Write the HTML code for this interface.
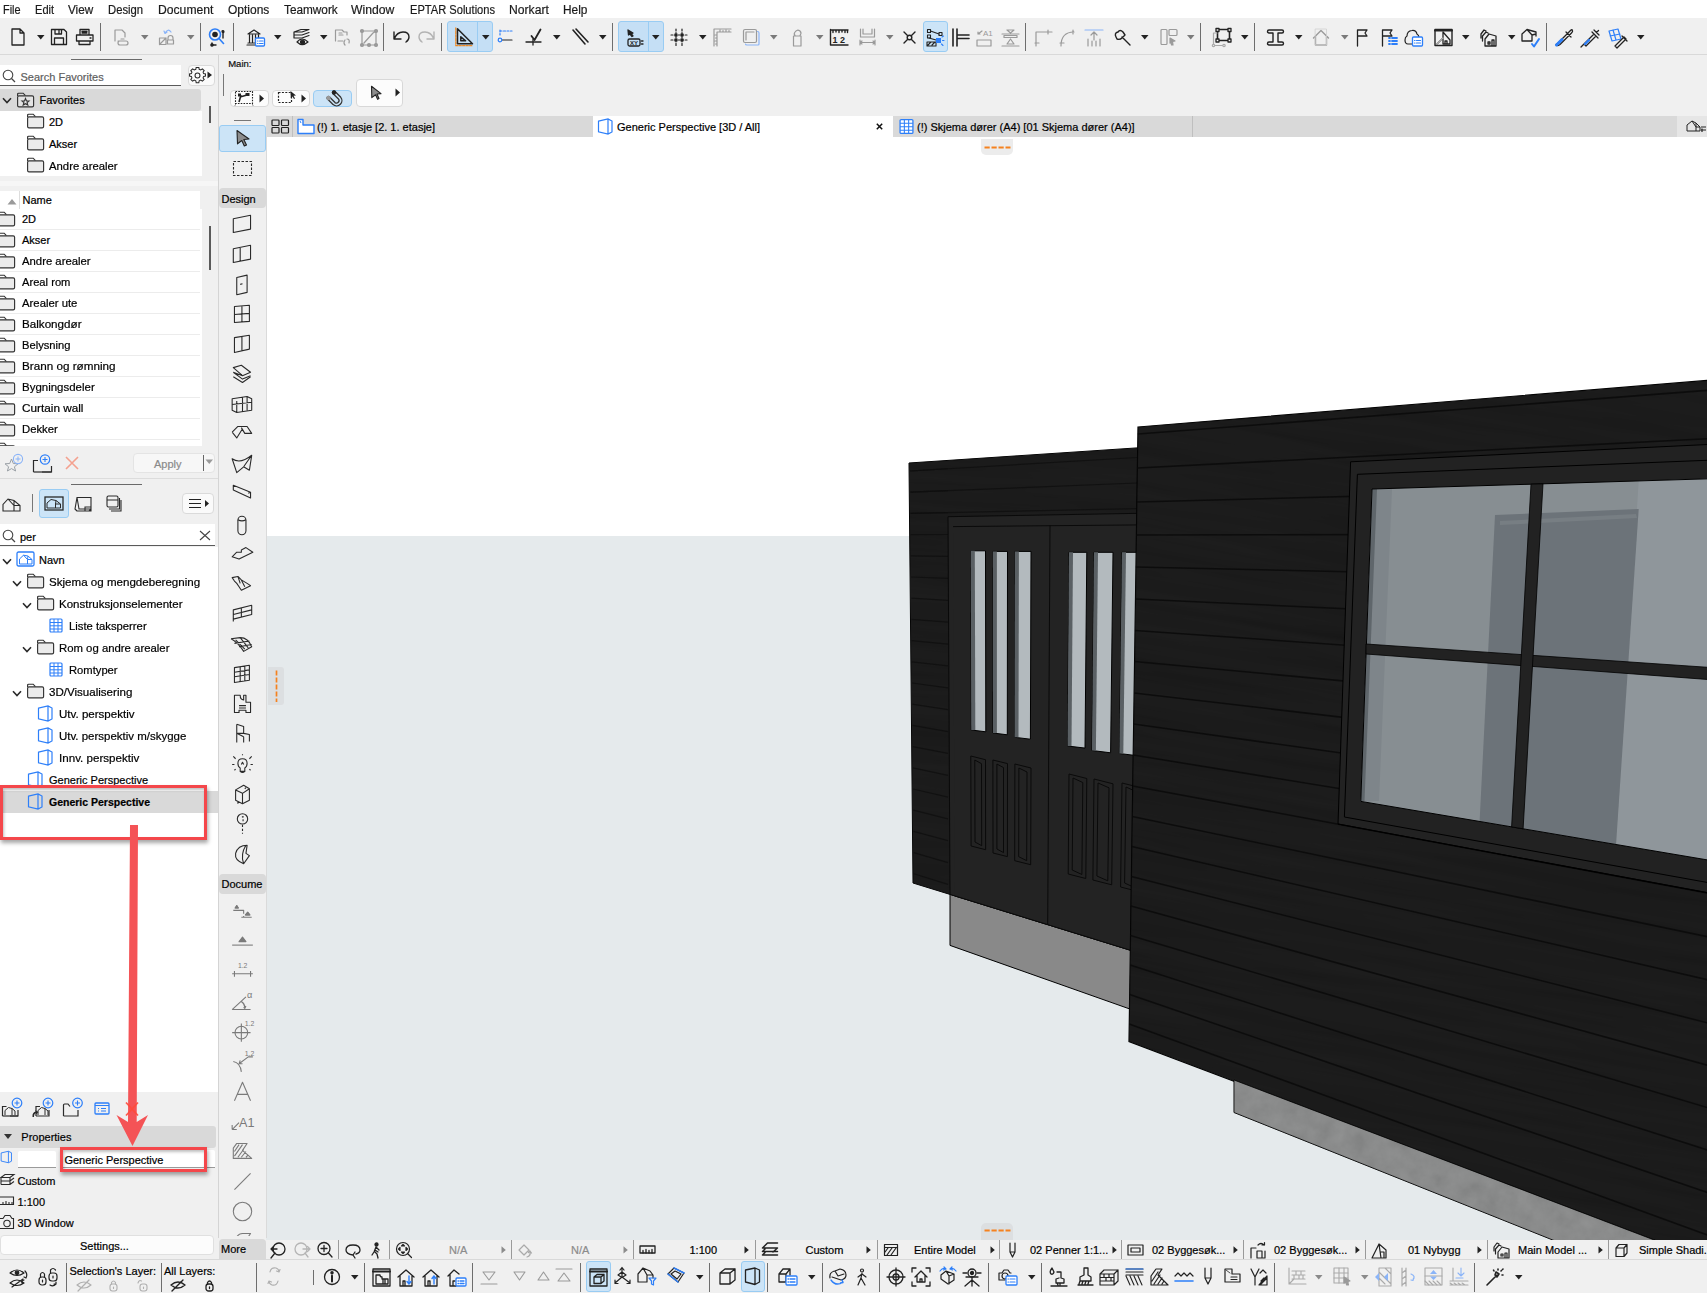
<!DOCTYPE html>
<html><head><meta charset="utf-8">
<style>
*{margin:0;padding:0;box-sizing:border-box}
html,body{width:1707px;height:1293px;overflow:hidden;background:#f0f0f0;font-family:"Liberation Sans",sans-serif;font-size:11px;color:#000}
.a{position:absolute}
.t{position:absolute;white-space:nowrap;line-height:1;-webkit-text-stroke:0.2px currentColor}
svg{position:absolute;overflow:visible}
</style></head><body>
<svg width="0" height="0" style="position:absolute">
<defs>
<symbol id="chev" viewBox="0 0 10 7"><path d="M1,1.2 L5,5.5 L9,1.2" fill="none" stroke="#2a2a2a" stroke-width="1.6"/></symbol>
<symbol id="folder" viewBox="0 0 19 16"><path d="M1.6,4 V2.2 Q1.6,1.2 2.6,1.2 H7.2 L9.4,3.6" fill="none" stroke="#333" stroke-width="1.15"/><rect x="1.6" y="3.8" width="16" height="11" rx="1.4" fill="#ebebeb" stroke="#333" stroke-width="1.15"/></symbol>
<symbol id="favfolder" viewBox="0 0 19 16"><path d="M1.6,4 V2.2 Q1.6,1.2 2.6,1.2 H7.2 L9.4,3.6" fill="none" stroke="#333" stroke-width="1.15"/><rect x="1.6" y="3.8" width="16" height="11" rx="1.4" fill="#e3e3e3" stroke="#333" stroke-width="1.15"/><path d="M9.5,6.5 L10.5,9 L13,9.1 L11.1,10.7 L11.8,13 L9.5,11.7 L7.2,13 L7.9,10.7 L6,9.1 L8.5,9Z" fill="none" stroke="#333" stroke-width="1.1"/></symbol>
<symbol id="navn" viewBox="0 0 19 16"><rect x="1" y="1" width="17" height="14" rx="1.5" fill="#fff" stroke="#2d7ff9" stroke-width="1.3"/><path d="M3.5,13 V8 L7.5,4.2 L12,5 L16,8.5 V13 Z M12,5 L11.5,8.5 H16 M11.5,13 V8.5 M7.5,4.2 L11.5,8.5" fill="none" stroke="#2d7ff9" stroke-width="1"/></symbol>
<symbol id="grid" viewBox="0 0 14 15"><rect x="1" y="1" width="12" height="13" rx="1" fill="#fff" stroke="#2d7ff9" stroke-width="1.2"/><path d="M5,1V14M9,1V14M1,4.5H13M1,7.8H13M1,11H13" stroke="#2d7ff9" stroke-width="1"/></symbol>
<symbol id="p3d" viewBox="0 0 17 17"><path d="M1.5,3.2 L11,1 L15,3 V14 L11,16 L1.5,13.8 Z M11,1 V16" fill="none" stroke="#2d7ff9" stroke-width="1.2"/></symbol>
<symbol id="gear" viewBox="0 0 18 18"><path d="M7.6,1.5 H10.4 L10.8,3.6 L12.4,4.3 L14.2,3.1 L16.1,5 L14.9,6.8 L15.5,8.4 L17.5,8.8 V11.2 L15.5,11.6 L14.9,13.2 L16.1,15 L14.2,16.9 L12.4,15.7 L10.8,16.4 L10.4,18.5 H7.6 L7.2,16.4 L5.6,15.7 L3.8,16.9 L1.9,15 L3.1,13.2 L2.5,11.6 L0.5,11.2 V8.8 L2.5,8.4 L3.1,6.8 L1.9,5 L3.8,3.1 L5.6,4.3 L7.2,3.6Z" transform="translate(0,-1) scale(1,0.95)" fill="none" stroke="#2a2a2a" stroke-width="1.1"/><circle cx="9" cy="9" r="2.6" fill="none" stroke="#2a2a2a" stroke-width="1.1"/></symbol>
</defs></svg>

<!-- 3D viewport -->
<div class="a" style="left:266px;top:137px;width:1441px;height:1103px;background:#fff;overflow:hidden">
<svg id="scene" width="1441" height="1103" viewBox="266 137 1441 1103" style="left:0;top:0">
<rect x="266" y="536" width="1441" height="704" fill="#e5eaec"/>
<!--SCENE_START-->
<defs>
<filter id="grain" x="0" y="0" width="100%" height="100%" filterUnits="objectBoundingBox">
<feTurbulence type="fractalNoise" baseFrequency="0.004 0.09" numOctaves="3" seed="7" result="n"/>
<feColorMatrix in="n" type="matrix" values="0.33 0.33 0.33 0 0  0.33 0.33 0.33 0 0  0.33 0.33 0.33 0 0  0 0 0 0 1"/>
</filter>
<filter id="concrete" x="0" y="0" width="100%" height="100%" filterUnits="objectBoundingBox">
<feTurbulence type="fractalNoise" baseFrequency="0.06" numOctaves="4" seed="2" result="n"/>
<feColorMatrix in="n" type="matrix" values="0.33 0.33 0.33 0 0  0.33 0.33 0.33 0 0  0.33 0.33 0.33 0 0  0 0 0 0 1"/>
</filter>
</defs>
<polygon points="909.0,463.0 1140.0,447.7 1140.0,953.2 950.0,894.4 913.0,883.0" fill="#121212" stroke="#000" stroke-width="1"/>
<clipPath id="lwc"><polygon points="909.0,463.0 1140.0,447.7 1140.0,953.2 950.0,894.4 913.0,883.0"/></clipPath>
<g clip-path="url(#lwc)"><rect x="850" y="380" width="350" height="600" filter="url(#grain)" opacity="0.06" transform="rotate(4 1000 680)"/></g>
<line x1="910.1" y1="471.0" x2="948" y2="468.7" stroke="#0f0f0f" stroke-width="1.2" stroke-opacity="0.8"/>
<line x1="910.3" y1="492.2" x2="948" y2="490.6" stroke="#0f0f0f" stroke-width="1.2" stroke-opacity="0.8"/>
<line x1="910.5" y1="513.4" x2="948" y2="512.6" stroke="#0f0f0f" stroke-width="1.2" stroke-opacity="0.8"/>
<line x1="910.7" y1="534.6" x2="948" y2="534.5" stroke="#0f0f0f" stroke-width="1.2" stroke-opacity="0.8"/>
<line x1="910.9" y1="555.8" x2="948" y2="556.4" stroke="#0f0f0f" stroke-width="1.2" stroke-opacity="0.8"/>
<line x1="911.1" y1="577.0" x2="948" y2="578.4" stroke="#0f0f0f" stroke-width="1.2" stroke-opacity="0.8"/>
<line x1="911.3" y1="598.2" x2="948" y2="600.3" stroke="#0f0f0f" stroke-width="1.2" stroke-opacity="0.8"/>
<line x1="911.5" y1="619.4" x2="948" y2="622.2" stroke="#0f0f0f" stroke-width="1.2" stroke-opacity="0.8"/>
<line x1="911.7" y1="640.6" x2="948" y2="644.1" stroke="#0f0f0f" stroke-width="1.2" stroke-opacity="0.8"/>
<line x1="911.9" y1="661.8" x2="948" y2="665.9" stroke="#0f0f0f" stroke-width="1.2" stroke-opacity="0.8"/>
<line x1="912.1" y1="683.0" x2="948" y2="687.8" stroke="#0f0f0f" stroke-width="1.2" stroke-opacity="0.8"/>
<line x1="912.3" y1="704.2" x2="948" y2="709.7" stroke="#0f0f0f" stroke-width="1.2" stroke-opacity="0.8"/>
<line x1="912.5" y1="725.4" x2="948" y2="731.6" stroke="#0f0f0f" stroke-width="1.2" stroke-opacity="0.8"/>
<line x1="912.7" y1="746.6" x2="948" y2="753.4" stroke="#0f0f0f" stroke-width="1.2" stroke-opacity="0.8"/>
<line x1="912.9" y1="767.8" x2="948" y2="775.3" stroke="#0f0f0f" stroke-width="1.2" stroke-opacity="0.8"/>
<line x1="913.1" y1="789.0" x2="948" y2="797.1" stroke="#0f0f0f" stroke-width="1.2" stroke-opacity="0.8"/>
<line x1="913.3" y1="810.2" x2="948" y2="818.9" stroke="#0f0f0f" stroke-width="1.2" stroke-opacity="0.8"/>
<line x1="913.5" y1="831.4" x2="948" y2="840.7" stroke="#0f0f0f" stroke-width="1.2" stroke-opacity="0.8"/>
<line x1="913.7" y1="852.6" x2="948" y2="862.6" stroke="#0f0f0f" stroke-width="1.2" stroke-opacity="0.8"/>
<line x1="913.9" y1="873.8" x2="948" y2="884.4" stroke="#0f0f0f" stroke-width="1.2" stroke-opacity="0.8"/>
<line x1="910.1" y1="471.0" x2="1137" y2="457.5" stroke="#0f0f0f" stroke-width="1.2" stroke-opacity="0.8"/>
<line x1="910.3" y1="492.2" x2="1137" y2="483.0" stroke="#0f0f0f" stroke-width="1.2" stroke-opacity="0.8"/>
<line x1="910.5" y1="513.4" x2="1137" y2="508.6" stroke="#0f0f0f" stroke-width="1.2" stroke-opacity="0.8"/>
<polygon points="950.0,894.4 1140.0,953.2 1140.0,1012.6 950.0,945.4" fill="#898989" stroke="#000" stroke-width="1"/>
<polygon points="948.0,516.7 1140.0,513.3 1140.0,953.2 950.0,894.4" fill="#232323" stroke="#0a0a0a" stroke-width="1"/>
<polyline points="953.0,526.6 1140.0,524.9 1140.0,953.2 954.8,895.9" fill="#232323" stroke="#0a0a0a" stroke-width="1"/>
<line x1="1050" y1="525.7" x2="1047.7" y2="924.7" stroke="#0a0a0a" stroke-width="1"/>
<polygon points="970.8,550.8 985.5,550.8 985.8,731.8 971.3,730.0" fill="#b3babe" stroke="#000" stroke-width="1"/>
<polygon points="970.8,550.8 974.8,550.8 975.3,730.0 971.3,730.0" fill="#5a6064"/>
<polygon points="992.9,551.4 1007.5,551.4 1007.3,734.8 993.0,733.0" fill="#b3babe" stroke="#000" stroke-width="1"/>
<polygon points="992.9,551.4 996.9,551.4 996.9,733.0 993.0,733.0" fill="#5a6064"/>
<polygon points="1014.9,551.4 1031.0,551.4 1030.4,739.2 1014.6,737.3" fill="#b3babe" stroke="#000" stroke-width="1"/>
<polygon points="1014.9,551.4 1018.9,551.4 1018.5,737.3 1014.6,737.3" fill="#5a6064"/>
<polygon points="1069.0,552.3 1086.8,552.3 1085.0,748.1 1067.6,746.0" fill="#b3babe" stroke="#000" stroke-width="1"/>
<polygon points="1069.0,552.3 1073.0,552.3 1071.5,746.0 1067.6,746.0" fill="#5a6064"/>
<polygon points="1094.0,552.3 1113.0,552.3 1110.6,752.8 1092.0,750.5" fill="#b3babe" stroke="#000" stroke-width="1"/>
<polygon points="1094.0,552.3 1098.0,552.3 1095.9,750.5 1092.0,750.5" fill="#5a6064"/>
<polygon points="1122.0,552.3 1140.0,552.3 1137.0,755.7 1119.4,753.5" fill="#b3babe" stroke="#000" stroke-width="1"/>
<polygon points="1122.0,552.3 1126.0,552.3 1123.3,753.5 1119.4,753.5" fill="#5a6064"/>
<polygon points="970.8,756.0 985.5,759.7 985.6,849.7 971.1,846.0" fill="none" stroke="#0a0a0a" stroke-width="1"/>
<polygon points="974.8,760.0 981.5,763.7 981.7,845.7 975.0,842.0" fill="none" stroke="#0a0a0a" stroke-width="1"/>
<polygon points="992.9,760.0 1007.5,763.6 1007.4,856.6 993.0,853.0" fill="none" stroke="#0a0a0a" stroke-width="1"/>
<polygon points="996.9,764.0 1003.5,767.6 1003.5,852.6 996.9,849.0" fill="none" stroke="#0a0a0a" stroke-width="1"/>
<polygon points="1014.9,764.0 1031.0,768.0 1030.7,864.7 1014.7,860.7" fill="none" stroke="#0a0a0a" stroke-width="1"/>
<polygon points="1018.9,768.0 1027.0,772.0 1026.7,860.7 1018.7,856.7" fill="none" stroke="#0a0a0a" stroke-width="1"/>
<polygon points="1069.0,774.0 1086.8,778.5 1085.8,878.5 1068.2,874.0" fill="none" stroke="#0a0a0a" stroke-width="1"/>
<polygon points="1073.0,778.0 1082.8,782.5 1081.9,874.5 1072.2,870.0" fill="none" stroke="#0a0a0a" stroke-width="1"/>
<polygon points="1094.0,779.0 1113.0,783.8 1111.7,884.8 1092.9,880.0" fill="none" stroke="#0a0a0a" stroke-width="1"/>
<polygon points="1098.0,783.0 1109.0,787.8 1107.8,880.8 1096.9,876.0" fill="none" stroke="#0a0a0a" stroke-width="1"/>
<polygon points="1122.0,783.0 1140.0,787.5 1138.4,891.5 1120.6,887.0" fill="none" stroke="#0a0a0a" stroke-width="1"/>
<polygon points="1126.0,787.0 1136.0,791.5 1134.4,887.5 1124.6,883.0" fill="none" stroke="#0a0a0a" stroke-width="1"/>
<polygon points="1138.0,427.0 1712.0,380.0 1712.0,1262.0 1129.0,1041.5" fill="#111111" stroke="#000" stroke-width="1.2"/>
<clipPath id="rwc"><polygon points="1138.0,427.0 1712.0,380.0 1712.0,1262.0 1129.0,1041.5"/></clipPath>
<g clip-path="url(#rwc)"><rect x="1000" y="250" width="800" height="1100" filter="url(#grain)" opacity="0.06" transform="rotate(10 1400 800)"/></g>
<line x1="1137.9" y1="434.0" x2="1712" y2="390.0" stroke="#0b0b0b" stroke-width="1.6" stroke-opacity="0.9"/>
<line x1="1137.4" y1="468.0" x2="1712" y2="438.5" stroke="#0b0b0b" stroke-width="1.6" stroke-opacity="0.9"/>
<line x1="1136.9" y1="502.0" x2="1712" y2="487.0" stroke="#0b0b0b" stroke-width="1.6" stroke-opacity="0.9"/>
<line x1="1136.4" y1="535.0" x2="1712" y2="534.1" stroke="#0b0b0b" stroke-width="1.6" stroke-opacity="0.9"/>
<line x1="1135.9" y1="567.0" x2="1712" y2="579.9" stroke="#0b0b0b" stroke-width="1.6" stroke-opacity="0.9"/>
<line x1="1135.5" y1="599.0" x2="1712" y2="625.7" stroke="#0b0b0b" stroke-width="1.6" stroke-opacity="0.9"/>
<line x1="1135.0" y1="630.5" x2="1712" y2="670.8" stroke="#0b0b0b" stroke-width="1.6" stroke-opacity="0.9"/>
<line x1="1134.6" y1="661.5" x2="1712" y2="715.2" stroke="#0b0b0b" stroke-width="1.6" stroke-opacity="0.9"/>
<line x1="1134.1" y1="693.0" x2="1712" y2="760.3" stroke="#0b0b0b" stroke-width="1.6" stroke-opacity="0.9"/>
<line x1="1133.6" y1="724.0" x2="1712" y2="804.8" stroke="#0b0b0b" stroke-width="1.6" stroke-opacity="0.9"/>
<line x1="1133.2" y1="755.0" x2="1712" y2="849.3" stroke="#0b0b0b" stroke-width="1.6" stroke-opacity="0.9"/>
<line x1="1132.7" y1="786.0" x2="1712" y2="893.8" stroke="#0b0b0b" stroke-width="1.6" stroke-opacity="0.9"/>
<line x1="1132.3" y1="816.5" x2="1712" y2="937.7" stroke="#0b0b0b" stroke-width="1.6" stroke-opacity="0.9"/>
<line x1="1131.8" y1="846.5" x2="1712" y2="980.8" stroke="#0b0b0b" stroke-width="1.6" stroke-opacity="0.9"/>
<line x1="1131.4" y1="876.5" x2="1712" y2="1024.0" stroke="#0b0b0b" stroke-width="1.6" stroke-opacity="0.9"/>
<line x1="1131.0" y1="906.0" x2="1712" y2="1066.5" stroke="#0b0b0b" stroke-width="1.6" stroke-opacity="0.9"/>
<line x1="1130.5" y1="935.5" x2="1712" y2="1109.0" stroke="#0b0b0b" stroke-width="1.6" stroke-opacity="0.9"/>
<line x1="1130.1" y1="965.0" x2="1712" y2="1151.5" stroke="#0b0b0b" stroke-width="1.6" stroke-opacity="0.9"/>
<line x1="1129.7" y1="994.5" x2="1712" y2="1194.1" stroke="#0b0b0b" stroke-width="1.6" stroke-opacity="0.9"/>
<line x1="1129.2" y1="1024.0" x2="1712" y2="1236.7" stroke="#0b0b0b" stroke-width="1.6" stroke-opacity="0.9"/>
<polygon points="1234.0,1080.0 1712.0,1262.0 1712.0,1303.7 1234.0,1112.5" fill="#7f8181" stroke="#000" stroke-width="1"/>
<clipPath id="rfc"><polygon points="1234.0,1080.0 1712.0,1262.0 1712.0,1303.7 1234.0,1112.5"/></clipPath>
<g clip-path="url(#rfc)"><rect x="1230" y="1070" width="480" height="180" filter="url(#concrete)" opacity="0.18"/></g>
<polygon points="1350.6,461.8 1712.0,444.3 1712.0,893.6 1338.0,824.0" fill="#222" stroke="#000" stroke-width="1"/>
<polygon points="1357.4,474.3 1712.0,460.1 1712.0,883.3 1344.4,817.0" fill="#222" stroke="#000" stroke-width="1"/>
<polygon points="1372.0,489.0 1712.0,478.7 1712.0,860.7 1360.8,801.4" fill="#878e92"/>
<polygon points="1638.7,480.9 1712.0,478.7 1712.0,860.7 1616.0,844.5" fill="#8f969b"/>
<polygon points="1495.0,515.0 1638.7,509.0 1616.0,844.5 1479.6,821.5" fill="#6c7379"/>
<polygon points="1500.0,521.0 1636.0,514.0 1637.0,518.0 1500.0,525.0" fill="#777e83"/>
<polygon points="1372.0,489.0 1392.0,489.0 1379.0,801.0 1360.8,801.4" fill="#7e858a"/>
<polygon points="1372.0,489.0 1377.0,489.0 1364.5,801.0 1360.8,801.4" fill="#5f666b"/>
<polygon points="1372.0,489.0 1712.0,478.7 1712.0,860.7 1360.8,801.4" fill="none" stroke="#000" stroke-width="1"/>
<polygon points="1366.0,644.0 1712.0,667.6 1712.0,679.8 1366.0,654.0" fill="#222" stroke="#000" stroke-width="0.8"/>
<polygon points="1531.0,484.2 1543.0,483.8 1523.1,828.8 1511.6,826.9" fill="#222" stroke="#000" stroke-width="0.8"/>
<line x1="1338" y1="824" x2="1712" y2="893.6" stroke="#000" stroke-width="1.2"/>
<!--SCENE_END-->
</svg>
</div>

<!--TOP_START-->
<div class="a" style="left:0px;top:0px;width:1707px;height:18px;background:#fff"></div>
<div class="t" style="left:2.6px;top:4.4px;font-size:12px;color:#1b1b1b;font-weight:normal;transform:scaleX(0.910);transform-origin:0 0;">File</div>
<div class="t" style="left:34.6px;top:4.4px;font-size:12px;color:#1b1b1b;font-weight:normal;transform:scaleX(0.924);transform-origin:0 0;">Edit</div>
<div class="t" style="left:68px;top:4.4px;font-size:12px;color:#1b1b1b;font-weight:normal;transform:scaleX(0.977);transform-origin:0 0;">View</div>
<div class="t" style="left:107.6px;top:4.4px;font-size:12px;color:#1b1b1b;font-weight:normal;transform:scaleX(0.940);transform-origin:0 0;">Design</div>
<div class="t" style="left:157.6px;top:4.4px;font-size:12px;color:#1b1b1b;font-weight:normal;transform:scaleX(1.013);transform-origin:0 0;">Document</div>
<div class="t" style="left:227.5px;top:4.4px;font-size:12px;color:#1b1b1b;font-weight:normal;transform:scaleX(0.999);transform-origin:0 0;">Options</div>
<div class="t" style="left:283.5px;top:4.4px;font-size:12px;color:#1b1b1b;font-weight:normal;transform:scaleX(0.982);transform-origin:0 0;">Teamwork</div>
<div class="t" style="left:350.5px;top:4.4px;font-size:12px;color:#1b1b1b;font-weight:normal;transform:scaleX(1.015);transform-origin:0 0;">Window</div>
<div class="t" style="left:409.5px;top:4.4px;font-size:12px;color:#1b1b1b;font-weight:normal;transform:scaleX(0.926);transform-origin:0 0;">EPTAR Solutions</div>
<div class="t" style="left:508.5px;top:4.4px;font-size:12px;color:#1b1b1b;font-weight:normal;transform:scaleX(1.012);transform-origin:0 0;">Norkart</div>
<div class="t" style="left:562.5px;top:4.4px;font-size:12px;color:#1b1b1b;font-weight:normal;transform:scaleX(0.989);transform-origin:0 0;">Help</div>
<div class="a" style="left:0px;top:54px;width:1707px;height:1px;background:#d9d9d9"></div>
<svg style="left:10px;top:28px" width="17" height="19"><g fill="none" stroke="#222" stroke-width="1.3" stroke-linejoin="round" stroke-linecap="round"><path d="M2,1 H10 L14,5 V17 H2Z M10,1 V5 H14"/></g></svg>
<svg style="left:37px;top:35px" width="8" height="5"><path d="M0,0 H7.5 L3.75,4.5Z" fill="#222"/></svg>
<svg style="left:50px;top:28px" width="19" height="19"><g fill="none" stroke="#222" stroke-width="1.3" stroke-linejoin="round" stroke-linecap="round"><path d="M1.5,1.5 H14 L16.5,4 V16.5 H1.5Z M5,1.5 V6 H11.5 V1.5 M4.5,16.5 V10 H13.5 V16.5 M9,2.5 V5"/></g></svg>
<svg style="left:75px;top:28px" width="20" height="19"><g fill="none" stroke="#222" stroke-width="1.3" stroke-linejoin="round" stroke-linecap="round"><path d="M5,7 V1.5 H14 V7 M1.5,7 H18 V13 H1.5Z M4,13 H15 V16.5 H4Z M7,3.5 H12 M7,5 H12 M15,10 H16"/></g></svg>
<div class="a" style="left:100px;top:23px;width:1px;height:28px;background:#6e6e6e"></div>
<svg style="left:113px;top:28px" width="18" height="19"><g fill="none" stroke="#9a9a9a" stroke-width="1.2" stroke-linejoin="round" stroke-linecap="round"><path d="M2,13 V2 H9 L12,5 V9 M5,13 H13 Q15,13 15,15 Q15,17 13,17 H7 Q5,17 5,15 Q5,13 7,13 M8,11 H11"/></g></svg>
<svg style="left:141px;top:35px" width="8" height="5"><path d="M0,0 H7.5 L3.75,4.5Z" fill="#7a7a7a"/></svg>
<svg style="left:158px;top:28px" width="19" height="19"><g fill="none" stroke="#9a9a9a" stroke-width="1.2" stroke-linejoin="round" stroke-linecap="round"><path d="M1.5,10 H8 V16.5 H1.5Z M1.5,16.5 L8,10 M12.5,7.5 Q15,7.5 15,10 V12 H10 V10 Q10,7.5 12.5,7.5 M9.5,12 H15.5 V16 H9.5Z"/><path d="M7,5 Q10,0 13,4 M6,3 L7,5.5 L9,4" stroke="#8ab4f8"/></g></svg>
<svg style="left:187px;top:35px" width="8" height="5"><path d="M0,0 H7.5 L3.75,4.5Z" fill="#7a7a7a"/></svg>
<div class="a" style="left:200px;top:23px;width:1px;height:28px;background:#6e6e6e"></div>
<svg style="left:208px;top:28px" width="19" height="20"><g fill="none" stroke="#222" stroke-width="1.2" stroke-linejoin="round" stroke-linecap="round"><circle cx="7" cy="6.5" r="5.5" stroke="#2d7ff9" stroke-width="1.6"/><circle cx="7" cy="6.5" r="2.8" fill="#222" stroke="none"/><path d="M11,10.5 L15.5,15.5" stroke="#2d7ff9" stroke-width="1.6"/><path d="M4,15 V17 H8 M15,4 V10 M15,3.5 L15.5,4.5" stroke-width="1.4"/><circle cx="4" cy="17" r="1.2" fill="#222"/><circle cx="15" cy="3.5" r="1" fill="#222"/></g></svg>
<div class="a" style="left:233px;top:23px;width:1px;height:28px;background:#6e6e6e"></div>
<svg style="left:246px;top:28px" width="20" height="20"><g fill="none" stroke="#222" stroke-width="1.2" stroke-linejoin="round" stroke-linecap="round"><path d="M1,17 H12 M2,15 H12 M2,6 L8,2 L14,6Z M3.5,7 V14 M6.5,7 V14 M9.5,7 V14 M12.5,7 V10"/><rect x="9.5" y="10" width="9" height="8" rx="1" fill="#fff" stroke="#2d7ff9" stroke-width="1.3"/><path d="M11.5,13 H12 M13.5,13 H17 M11.5,15.5 H12 M13.5,15.5 H17" stroke="#2d7ff9"/></g></svg>
<svg style="left:274px;top:35px" width="8" height="5"><path d="M0,0 H7.5 L3.75,4.5Z" fill="#222"/></svg>
<svg style="left:292px;top:28px" width="19" height="20"><g fill="none" stroke="#222" stroke-width="1.2" stroke-linejoin="round" stroke-linecap="round"><path d="M2,4 L9,1.5 H17 L10,4Z M2,7 H10 L17,4.5 M2,10 H10 L17,7.5 M2,4 V10"/><path d="M5,14 Q10,8 16,14 Q10,19 5,14Z" fill="#f0f0f0"/><circle cx="10.5" cy="14" r="2" fill="#222"/></g></svg>
<svg style="left:320px;top:35px" width="8" height="5"><path d="M0,0 H7.5 L3.75,4.5Z" fill="#222"/></svg>
<svg style="left:334px;top:28px" width="19" height="19"><g fill="none" stroke="#9a9a9a" stroke-width="1.2" stroke-linejoin="round" stroke-linecap="round"><path d="M1.5,13 V2 H8 L10,4 H13 V7 M4,13 H9 M5,5 H8 M5,7 H9 M13,11 Q16,11 15,15 M11,17 Q9,15 11,12"/></g></svg>
<svg style="left:359px;top:28px" width="20" height="20"><g fill="none" stroke="#9a9a9a" stroke-width="1.2" stroke-linejoin="round" stroke-linecap="round"><path d="M3,17 V3 H17 V17Z M5,15 L14,5 L17,3"/><circle cx="3" cy="3" r="1.5" fill="#9a9a9a"/><circle cx="17" cy="3" r="1.5" fill="#9a9a9a"/><circle cx="3" cy="17" r="1.5" fill="#9a9a9a"/><circle cx="17" cy="17" r="1.5" fill="#9a9a9a"/><circle cx="10" cy="17" r="1.5" fill="#9a9a9a"/></g></svg>
<div class="a" style="left:383px;top:23px;width:1px;height:28px;background:#6e6e6e"></div>
<svg style="left:392px;top:28px" width="19" height="18"><g fill="none" stroke="#222" stroke-width="1.4" stroke-linejoin="round" stroke-linecap="round"><path d="M2,4 V11 H9 M2,11 Q5,4 11,4 Q17,4 17,9 Q17,12 14,14"/></g></svg>
<svg style="left:417px;top:28px" width="19" height="18"><g fill="none" stroke="#b3b3b3" stroke-width="1.4" stroke-linejoin="round" stroke-linecap="round"><path d="M17,4 V11 H10 M17,11 Q14,4 8,4 Q2,4 2,9 Q2,12 5,14"/></g></svg>
<div class="a" style="left:441px;top:23px;width:1px;height:28px;background:#6e6e6e"></div>
<div class="a" style="left:447px;top:21px;width:46px;height:31px;background:#c5dff5;border:1px solid #99ccf3;border-radius:3px"></div>
<div class="a" style="left:477px;top:21px;width:1px;height:31px;background:#99ccf3"></div>
<svg style="left:455px;top:27px" width="20" height="20"><g fill="none" stroke="#222" stroke-width="1.5" stroke-linejoin="round" stroke-linecap="round"><path d="M0.8,1 V18.7 H18" stroke="#f08a24" stroke-width="1.3" stroke-dasharray="2.2,1.3"/><path d="M2.5,1.8 L17.5,16.8 H2.5Z M5.8,9.8 L10.6,13.8 H5.8Z" stroke-width="1.5"/></g></svg>
<svg style="left:482px;top:35px" width="8" height="5"><path d="M0,0 H7.5 L3.75,4.5Z" fill="#222"/></svg>
<svg style="left:497px;top:28px" width="17" height="18"><g fill="none" stroke="#222" stroke-width="1.2" stroke-linejoin="round" stroke-linecap="round"><path d="M3,2 V7 M3,3 H15" stroke="#2d7ff9" stroke-dasharray="2,1.5"/><path d="M5,12 H15"/><circle cx="3" cy="12" r="1.8" stroke="#2d7ff9"/></g></svg>
<svg style="left:525px;top:28px" width="17" height="19"><g fill="none" stroke="#222" stroke-width="1.4" stroke-linejoin="round" stroke-linecap="round"><path d="M6.5,8 L9.5,12 L15.5,1.5" stroke-width="1.8"/><path d="M1,14 H16 M8,11.5 V17" stroke-width="1.3"/></g></svg>
<svg style="left:553px;top:35px" width="8" height="5"><path d="M0,0 H7.5 L3.75,4.5Z" fill="#222"/></svg>
<svg style="left:571px;top:28px" width="19" height="18"><g fill="none" stroke="#222" stroke-width="1.6" stroke-linejoin="round" stroke-linecap="round"><path d="M2,2 L14,16 M5,1 L17,14"/></g></svg>
<svg style="left:599px;top:35px" width="8" height="5"><path d="M0,0 H7.5 L3.75,4.5Z" fill="#222"/></svg>
<div class="a" style="left:612px;top:23px;width:1px;height:28px;background:#6e6e6e"></div>
<div class="a" style="left:618px;top:21px;width:46px;height:31px;background:#c5dff5;border:1px solid #99ccf3;border-radius:3px"></div>
<div class="a" style="left:648px;top:21px;width:1px;height:31px;background:#99ccf3"></div>
<svg style="left:626px;top:28px" width="18" height="19"><g fill="none" stroke="#222" stroke-width="1.3" stroke-linejoin="round" stroke-linecap="round"><path d="M2,2 L7,5 L5,5.5 L7,8 L6,8.5 L4,6 L2.5,7Z" fill="#222"/><rect x="2" y="11" width="12" height="7" rx="1.5"/><text x="4" y="17" font-size="6" font-weight="bold" fill="#222" stroke="none" font-family="Liberation Sans">XY</text><path d="M15.5,13 H17 M15.5,16 H17"/></g></svg>
<svg style="left:652px;top:35px" width="8" height="5"><path d="M0,0 H7.5 L3.75,4.5Z" fill="#222"/></svg>
<svg style="left:670px;top:28px" width="19" height="19"><g fill="none" stroke="#222" stroke-width="1.2" stroke-linejoin="round" stroke-linecap="round"><path d="M1,7 H17 M1,12 H17 M6,1 V18 M12,1 V18" stroke-dasharray="2,1.6"/><rect x="4.5" y="5.5" width="3" height="3" fill="#222" stroke="none"/><rect x="10.5" y="5.5" width="3" height="3" fill="#222" stroke="none"/><rect x="4.5" y="10.5" width="3" height="3" fill="#222" stroke="none"/><rect x="10.5" y="10.5" width="3" height="3" fill="#222" stroke="none"/></g></svg>
<svg style="left:699px;top:35px" width="8" height="5"><path d="M0,0 H7.5 L3.75,4.5Z" fill="#222"/></svg>
<svg style="left:713px;top:28px" width="19" height="19"><g fill="none" stroke="#9a9a9a" stroke-width="1.2" stroke-linejoin="round" stroke-linecap="round"><path d="M1,18 V1 H18 M4,18 V4 H18 M7,4 V2 M10,4 V2.5 M13,4 V2 M16,4 V2.5 M4,7 H2 M4,10 H2.5 M4,13 H2 M4,16 H2.5"/></g></svg>
<svg style="left:742px;top:28px" width="19" height="19"><g fill="none" stroke="#9a9a9a" stroke-width="1.2" stroke-linejoin="round" stroke-linecap="round"><rect x="1.5" y="1.5" width="13" height="13" rx="1.5"/><path d="M4,4 H12 M4,4 V12"/><path d="M15.5,3.5 Q17,3.5 17,5 V16 Q17,17 16,17 H5 Q3.5,17 3.5,16" stroke="#8ab4f8"/></g></svg>
<svg style="left:770px;top:35px" width="8" height="5"><path d="M0,0 H7.5 L3.75,4.5Z" fill="#7a7a7a"/></svg>
<svg style="left:791px;top:28px" width="13" height="19"><g fill="none" stroke="#9a9a9a" stroke-width="1.2" stroke-linejoin="round" stroke-linecap="round"><path d="M3,8 H10 V18 H2.5 V8 M4,7.5 Q2.5,6 4,4 Q6,1 9,3 Q11,5 9,7.5"/></g></svg>
<svg style="left:816px;top:35px" width="8" height="5"><path d="M0,0 H7.5 L3.75,4.5Z" fill="#7a7a7a"/></svg>
<svg style="left:829px;top:28px" width="20" height="19"><g fill="none" stroke="#222" stroke-width="1.4" stroke-linejoin="round" stroke-linecap="round"><path d="M1.5,1.5 V17 H19 M1.5,2 H19 M4,2 V4.5 M7,2 V4 M10,2 V4.5 M13,2 V4 M16,2 V4.5 M18.5,2 V4.5"/><text x="3.5" y="15" font-size="9" font-weight="bold" fill="#222" stroke="none" font-family="Liberation Sans">1 2</text></g></svg>
<svg style="left:859px;top:28px" width="18" height="19"><g fill="none" stroke="#9a9a9a" stroke-width="1.2" stroke-linejoin="round" stroke-linecap="round"><path d="M1.5,1 V9 H15.5 V1 M4,1 V6 H13 V1 M1,12 V17 M16,12 V17 M1,14.5 H16 M3,13 L1,14.5 L3,16 M14,13 L16,14.5 L14,16"/></g></svg>
<svg style="left:886px;top:35px" width="8" height="5"><path d="M0,0 H7.5 L3.75,4.5Z" fill="#7a7a7a"/></svg>
<svg style="left:903px;top:31px" width="14" height="14"><g fill="none" stroke="#222" stroke-width="1.4" stroke-linejoin="round" stroke-linecap="round"><path d="M1,1 L12,12 M12,1 L1,12"/><circle cx="6.5" cy="6.5" r="2.3" fill="#f0f0f0"/></g></svg>
<div class="a" style="left:923px;top:21px;width:25px;height:31px;background:#cce4f7;border:1px solid #99ccf3;border-radius:3px"></div>
<svg style="left:926px;top:28px" width="19" height="19"><g fill="none" stroke="#222" stroke-width="1.1" stroke-linejoin="round" stroke-linecap="round"><rect x="1.5" y="1.5" width="3" height="3"/><rect x="13" y="4.5" width="3" height="3"/><rect x="1.5" y="7" width="3" height="3"/><path d="M4.5,3 L13,6 M3,10 L13.5,13 M1,14 H10 V18 H1Z M2,17 L5,14 M6,17 L9,14"/><rect x="10" y="10" width="5" height="5" fill="#2d7ff9" stroke="none"/><path d="M16,9 L17.5,8 M16.5,12.5 H18 M15.5,16 L17,17.5" stroke="#2d7ff9"/></g></svg>
<svg style="left:951px;top:28px" width="19" height="19"><g fill="none" stroke="#222" stroke-width="1.5" stroke-linejoin="round" stroke-linecap="round"><path d="M2,1 V18 M6,1 V18 M6,7 H18 M6,10.5 H18" stroke-width="1.6"/></g></svg>
<svg style="left:976px;top:28px" width="19" height="19"><g fill="none" stroke="#9a9a9a" stroke-width="1.2" stroke-linejoin="round" stroke-linecap="round"><path d="M1,18 V12 H15 V18 Z M2,6 L6,3 M2,6 V4 M2,6 H4"/><text x="7" y="8" font-size="8" fill="#9a9a9a" stroke="none" font-family="Liberation Sans">A1</text></g></svg>
<svg style="left:1001px;top:28px" width="19" height="19"><g fill="none" stroke="#9a9a9a" stroke-width="1.2" stroke-linejoin="round" stroke-linecap="round"><path d="M1,6 H18 M1,18 H18 M3,7.5 H16 V9.5 H3Z M6,2 H13 L9.5,5Z M6,16 H13 L9.5,11Z"/></g></svg>
<div class="a" style="left:1025px;top:23px;width:1px;height:28px;background:#6e6e6e"></div>
<svg style="left:1034px;top:28px" width="19" height="19"><g fill="none" stroke="#9a9a9a" stroke-width="1.2" stroke-linejoin="round" stroke-linecap="round"><path d="M2,18 V4 H18 M14,2 V6 M1,15 H5"/></g></svg>
<svg style="left:1059px;top:28px" width="19" height="19"><g fill="none" stroke="#9a9a9a" stroke-width="1.2" stroke-linejoin="round" stroke-linecap="round"><path d="M2,18 Q2,4 15,4 M14,2 V6 M1,15 H5"/></g></svg>
<svg style="left:1084px;top:28px" width="20" height="19"><g fill="none" stroke="#9a9a9a" stroke-width="1.2" stroke-linejoin="round" stroke-linecap="round"><path d="M1,2 H19" stroke="#8ab4f8"/><path d="M10,4 V12 M7,7 L10,4 L13,7 M4,11 V18 M8,13 V18 M12,13 V18 M16,11 V18"/></g></svg>
<svg style="left:1113px;top:28px" width="19" height="19"><g fill="none" stroke="#222" stroke-width="1.4" stroke-linejoin="round" stroke-linecap="round"><path d="M3,9 Q1,5 5,4 Q7,1 10,4 L12,7 L9,10 Q7,12 4,11Z M9,9 L17,17" stroke-width="1.4"/></g></svg>
<svg style="left:1141px;top:35px" width="8" height="5"><path d="M0,0 H7.5 L3.75,4.5Z" fill="#222"/></svg>
<svg style="left:1160px;top:28px" width="19" height="19"><g fill="none" stroke="#9a9a9a" stroke-width="1.2" stroke-linejoin="round" stroke-linecap="round"><rect x="1" y="1.5" width="6" height="15" rx="1"/><rect x="9" y="1.5" width="8" height="6" rx="1"/><path d="M10,10 L15,13 L12.5,13.5 L13,17 L11.5,17 L11,14 L10,15Z" fill="#9a9a9a"/></g></svg>
<svg style="left:1187px;top:35px" width="8" height="5"><path d="M0,0 H7.5 L3.75,4.5Z" fill="#7a7a7a"/></svg>
<div class="a" style="left:1200px;top:23px;width:1px;height:28px;background:#6e6e6e"></div>
<svg style="left:1212px;top:28px" width="20" height="20"><g fill="none" stroke="#222" stroke-width="1.2" stroke-linejoin="round" stroke-linecap="round"><rect x="5.5" y="1.5" width="12" height="11" stroke-width="1.6"/><rect x="4" y="0.5" width="3" height="3" fill="#f0f0f0" stroke-width="1.3"/><rect x="16" y="0.5" width="3" height="3" fill="#f0f0f0" stroke-width="1.3"/><rect x="4" y="11" width="3" height="3" fill="#f0f0f0" stroke-width="1.3"/><rect x="16" y="11" width="3" height="3" fill="#f0f0f0" stroke-width="1.3"/><path d="M1.5,5 V17.5 H12 M1.5,5 H5" stroke="#aaa"/><circle cx="1.5" cy="17.5" r="1.2" fill="#f0f0f0" stroke="#aaa"/><circle cx="12" cy="17.5" r="1.2" fill="#f0f0f0" stroke="#aaa"/></g></svg>
<svg style="left:1241px;top:35px" width="8" height="5"><path d="M0,0 H7.5 L3.75,4.5Z" fill="#222"/></svg>
<div class="a" style="left:1254px;top:23px;width:1px;height:28px;background:#6e6e6e"></div>
<svg style="left:1267px;top:28px" width="18" height="19"><g fill="none" stroke="#222" stroke-width="1.4" stroke-linejoin="round" stroke-linecap="round"><path d="M2,2 H15 Q16.5,2 16.5,3.5 Q16.5,5 15,5 H11 V14 H15 Q16.5,14 16.5,15.5 Q16.5,17 15,17 H2 Q0.5,17 0.5,15.5 Q0.5,14 2,14 H6 V5 H2 Q0.5,5 0.5,3.5 Q0.5,2 2,2Z"/></g></svg>
<svg style="left:1295px;top:35px" width="8" height="5"><path d="M0,0 H7.5 L3.75,4.5Z" fill="#222"/></svg>
<svg style="left:1312px;top:28px" width="19" height="19"><g fill="none" stroke="#9a9a9a" stroke-width="1.4" stroke-linejoin="round" stroke-linecap="round"><path d="M3.5,8 V17 H14.5 V8 M1.5,10 L9,2.5 L16.5,10"/><rect x="3.5" y="1" width="11" height="16" stroke="#cfcfcf" stroke-width="0.8"/></g></svg>
<svg style="left:1341px;top:35px" width="8" height="5"><path d="M0,0 H7.5 L3.75,4.5Z" fill="#7a7a7a"/></svg>
<svg style="left:1356px;top:28px" width="13" height="19"><g fill="none" stroke="#222" stroke-width="1.3" stroke-linejoin="round" stroke-linecap="round"><path d="M1.5,18 V2 H11 L9,5 L11,8 H1.5"/></g></svg>
<svg style="left:1381px;top:28px" width="17" height="19"><g fill="none" stroke="#222" stroke-width="1.3" stroke-linejoin="round" stroke-linecap="round"><path d="M1.5,18 V2 H11 L9,5 L11,8 H1.5"/><path d="M8,10 H9 M11,10 H16 M8,13 H9 M11,13 H16 M8,16 H9 M11,16 H16" stroke="#2d7ff9" stroke-width="1.8"/></g></svg>
<svg style="left:1404px;top:28px" width="20" height="20"><g fill="none" stroke="#222" stroke-width="1.2" stroke-linejoin="round" stroke-linecap="round"><path d="M9,16 H4 Q1,16 1,12 Q1,9 3,8 Q3,3 8,2.5 Q12,2 13,6 Q15,7 15,10"/><rect x="8.5" y="9" width="10" height="9" rx="1" fill="#fff" stroke="#2d7ff9" stroke-width="1.3"/><path d="M10.5,12.5 H11 M12.5,12.5 H16.5 M10.5,15 H11 M12.5,15 H16.5" stroke="#2d7ff9"/></g></svg>
<svg style="left:1434px;top:28px" width="19" height="19"><g fill="none" stroke="#222" stroke-width="1.3" stroke-linejoin="round" stroke-linecap="round"><rect x="1" y="1.5" width="17" height="16" stroke-width="1.4"/><path d="M1,2.5 H18" stroke-width="2"/><path d="M3,16 L9,10 M9,4 L16,12 V16 H9Z M11,16 V13 H13 V16"/><path d="M3,16 L9,10" stroke="#aaa"/></g></svg>
<svg style="left:1462px;top:35px" width="8" height="5"><path d="M0,0 H7.5 L3.75,4.5Z" fill="#222"/></svg>
<svg style="left:1480px;top:28px" width="18" height="20"><g fill="none" stroke="#222" stroke-width="1.3" stroke-linejoin="round" stroke-linecap="round"><path d="M1,10 V6 L4,2 L6,3 M2.5,13 V8 L6,4 L8,5 M5,18 V11 L9,6 L16,8 V18Z M8,14 H10 V16 H8Z M12,18 V12 H14 V18"/></g></svg>
<svg style="left:1508px;top:35px" width="8" height="5"><path d="M0,0 H7.5 L3.75,4.5Z" fill="#222"/></svg>
<svg style="left:1521px;top:28px" width="19" height="20"><g fill="none" stroke="#222" stroke-width="1.3" stroke-linejoin="round" stroke-linecap="round"><path d="M1,13 V6 L6,1.5 L15,4 V8 M6,1.5 L11,7 V13 H1 M11,7 L15,6"/><path d="M11,16 L13,18.5 L18,11" stroke="#2d7ff9" stroke-width="2"/></g></svg>
<div class="a" style="left:1546px;top:23px;width:1px;height:28px;background:#6e6e6e"></div>
<svg style="left:1554px;top:28px" width="20" height="20"><g fill="none" stroke="#222" stroke-width="1.3" stroke-linejoin="round" stroke-linecap="round"><path d="M3,16 L14,5 L16.5,2.5 Q18,1 18.5,2.5 Q19,3.5 17.5,5 L6,16.5 Q4,18 2.5,17.5 Q1.5,16 3,16Z M12,4 L17,9"/><path d="M2.5,17 L8,11.5" stroke="#2d7ff9" stroke-width="3"/></g></svg>
<svg style="left:1580px;top:28px" width="20" height="20"><g fill="none" stroke="#222" stroke-width="1.3" stroke-linejoin="round" stroke-linecap="round"><path d="M1,19 L4,16 M4,16 L14,6 L16,8 L6,18Z M12,4 L18,10 M14,2 L19,7 M16.5,4.5 L18.5,2.5"/><path d="M5,16 L9,12" stroke="#2d7ff9" stroke-width="2.4"/></g></svg>
<svg style="left:1608px;top:28px" width="20" height="20"><g fill="none" stroke="#222" stroke-width="1.2" stroke-linejoin="round" stroke-linecap="round"><path d="M1,3 L10,1 L13,11 L4,13Z M5,2 L8,12 M2,8 L12,6" stroke="#2d7ff9"/><path d="M7,18 L16,9 L18,11 L9,20Z M14,8 L19,13" stroke-width="1.3"/></g></svg>
<svg style="left:1637px;top:35px" width="8" height="5"><path d="M0,0 H7.5 L3.75,4.5Z" fill="#222"/></svg>
<div class="t" style="left:228.2px;top:58.9px;font-size:9.5px;color:#111;font-weight:normal;">Main:</div>
<div class="a" style="left:223px;top:74px;width:1px;height:22px;background:#777"></div>
<div class="a" style="left:229.5px;top:90px;width:39px;height:17px;background:#fcfcfc;border:1px solid #d8d8d8;border-radius:4px"></div>
<div class="a" style="left:272px;top:90px;width:38px;height:17px;background:#fcfcfc;border:1px solid #d8d8d8;border-radius:4px"></div>
<div class="a" style="left:313px;top:90px;width:39px;height:17px;background:#cce4f7;border:1px solid #99ccf3;border-radius:4px"></div>
<div class="a" style="left:355.5px;top:79px;width:47px;height:28px;background:#fcfcfc;border:1px solid #d8d8d8;border-radius:4px"></div>
<svg style="left:234px;top:90px" width="20" height="16"><rect x="1.5" y="1.5" width="17" height="12" fill="none" stroke="#222" stroke-width="1.1" stroke-dasharray="1.6,1.2"/><path d="M5,12 L7,5 M6,7 L13,5" stroke="#222" stroke-width="1.6" fill="none"/><rect x="4" y="3.5" width="3" height="3" fill="#222"/><rect x="11.5" y="3" width="4" height="3" fill="#222"/><path d="M1.5,14.5 L1,15.5 M18.5,14.5 L19,15.5" stroke="#222" stroke-width="1"/></svg>
<svg style="left:259px;top:94px" width="6" height="9"><path d="M0.5,0.5 L5,4.5 L0.5,8.5Z" fill="#222"/></svg>
<svg style="left:277px;top:90px" width="20" height="14"><rect x="1.5" y="2.5" width="13" height="10" fill="none" stroke="#222" stroke-width="1.2" stroke-dasharray="2,1.4"/><path d="M13.5,1 L19,5.5 L16.5,5.8 L18,8.5 L17,9 L15.5,6.5 L13.8,8Z" fill="#222"/></svg>
<svg style="left:301px;top:94px" width="6" height="9"><path d="M0.5,0.5 L5,4.5 L0.5,8.5Z" fill="#222"/></svg>
<svg style="left:323px;top:88px" width="22" height="20"><path d="M5.5,10 L11,15.5 A3.9,3.9 0 0 0 16.5,10 L11,4.5" fill="none" stroke="#333" stroke-width="4.2" stroke-linecap="round"/><path d="M5.5,10 L11,15.5 A3.9,3.9 0 0 0 16.5,10 L11,4.5" fill="none" stroke="#cce4f7" stroke-width="1.6" stroke-linecap="butt"/><circle cx="5.5" cy="10" r="2.2" fill="#999"/><circle cx="11" cy="4.5" r="2.2" fill="#222"/></svg>
<svg style="left:370px;top:85px" width="13" height="16"><path d="M1.5,1.2 L11,8.6 L7,9 L9,13.5 L7.6,14.3 L5.6,9.8 L1.8,12.6Z" fill="#8c8c8c" stroke="#222" stroke-width="1.1" stroke-linejoin="round"/></svg>
<svg style="left:395px;top:88px" width="6" height="9"><path d="M0.5,0.5 L5,4.5 L0.5,8.5Z" fill="#222"/></svg>
<div class="a" style="left:267px;top:116px;width:1440px;height:21px;background:#d9d9d9"></div>
<svg style="left:271px;top:119px" width="19" height="15"><g fill="none" stroke="#222" stroke-width="1.2"><rect x="1" y="1" width="7" height="5.5" rx="0.8"/><rect x="10.5" y="1" width="7" height="5.5" rx="0.8"/><rect x="1" y="8.5" width="7" height="5.5" rx="0.8"/><rect x="10.5" y="8.5" width="7" height="5.5" rx="0.8"/></g></svg>
<div class="a" style="left:292px;top:116px;width:1px;height:21px;background:#bfbfbf"></div>
<svg style="left:297px;top:118px" width="19" height="17"><path d="M1,1.5 H6 V7 H17 V15.5 H1Z" fill="#fff" stroke="#2d7ff9" stroke-width="1.4" stroke-linejoin="round"/><path d="M3,3 L4,5" stroke="#2d7ff9" stroke-width="1"/></svg>
<div class="t" style="left:317px;top:122.3px;font-size:11px;color:#000;font-weight:normal;">(!) 1. etasje [2. 1. etasje]</div>
<div class="a" style="left:593px;top:116px;width:300px;height:22px;background:#fff"></div>
<svg style="left:597px;top:118px" width="17" height="17"><use href="#p3d"/></svg>
<div class="t" style="left:617px;top:122.3px;font-size:11px;color:#000;font-weight:normal;">Generic Perspective [3D / All]</div>
<svg style="left:876px;top:123px" width="7" height="7"><path d="M0.8,0.8 L6.2,6.2 M6.2,0.8 L0.8,6.2" stroke="#111" stroke-width="1.5"/></svg>
<svg style="left:899px;top:118px" width="15" height="17"><use href="#grid"/></svg>
<div class="t" style="left:917px;top:122.3px;font-size:11px;color:#000;font-weight:normal;">(!) Skjema dører (A4) [01 Skjema dører (A4)]</div>
<div class="a" style="left:1192px;top:116px;width:1px;height:21px;background:#bfbfbf"></div>
<div class="a" style="left:1677px;top:116px;width:30px;height:21px;background:#e6e6e6"></div>
<svg style="left:1686px;top:119px" width="21" height="15"><path d="M1,12 V6 L6,2 L10,4 L14,8 V12Z M10,4 L10,12 M6,2 L10,8 H14" fill="none" stroke="#222" stroke-width="1"/><path d="M15,8 H20 M15,11 H20 M16,9.5 V13" stroke="#222" stroke-width="1.2"/></svg>
<div class="a" style="left:981px;top:139px;width:32px;height:16px;background:#ececec;border-radius:0 0 5px 5px"></div>
<svg style="left:984px;top:146px" width="27" height="4"><path d="M0.5,1.5 H26.5" stroke="#f5821f" stroke-width="1.8" stroke-dasharray="5.2,1.8"/></svg>
<!--TOP_END-->

<!-- left panel -->
<div class="a" style="left:218px;top:55px;width:1px;height:1183px;background:#d4d4d4"></div>
<!--LEFT_START-->
<div class="a" style="left:71px;top:59px;width:71px;height:1px;background:#6a6a6a"></div>
<div class="a" style="left:0px;top:65px;width:181px;height:21px;background:#fff;border-bottom:1.5px solid #5a5a5a"></div>
<svg style="left:2px;top:69px" width="14" height="14"><circle cx="6" cy="6" r="4.8" fill="none" stroke="#444" stroke-width="1.1"/><line x1="9.5" y1="9.5" x2="13" y2="13" stroke="#444" stroke-width="1.2"/></svg>
<div class="t" style="left:20.5px;top:71.8px;font-size:11px;color:#5e5e5e;font-weight:normal;">Search Favorites</div>
<div class="a" style="left:188px;top:65px;width:27px;height:21px;background:#fafafa;border:1px solid #dadada;border-radius:4px"></div>
<svg style="left:189px;top:67px" width="17" height="17" viewBox="0 0 18 18"><use href="#gear"/></svg>
<svg style="left:206.5px;top:71px" width="6" height="8"><path d="M0.5,0.5 L5,4 L0.5,7.5Z" fill="#222"/></svg>
<div class="a" style="left:0px;top:89px;width:201px;height:22px;background:#d9d9d9;border-radius:0 3px 3px 0"></div>
<svg style="left:2px;top:97px" width="10" height="7"><use href="#chev" /></svg>
<svg style="left:16px;top:92px" width="19" height="16"><use href="#favfolder" /></svg>
<div class="t" style="left:39.5px;top:95.3px;font-size:11px;color:#000;font-weight:normal;">Favorites</div>
<div class="a" style="left:0px;top:111px;width:202px;height:65px;background:#fff"></div>
<svg style="left:26px;top:113px" width="19" height="16"><use href="#folder" /></svg>
<div class="t" style="left:49px;top:116.9px;font-size:11px;color:#000;font-weight:normal;">2D</div>
<svg style="left:26px;top:135px" width="19" height="16"><use href="#folder" /></svg>
<div class="t" style="left:49px;top:138.9px;font-size:11px;color:#000;font-weight:normal;">Akser</div>
<svg style="left:26px;top:157px" width="19" height="16"><use href="#folder" /></svg>
<div class="t" style="left:49px;top:160.9px;font-size:11px;color:#000;font-weight:normal;transform:scaleX(1.029);transform-origin:0 0;">Andre arealer</div>
<div class="a" style="left:209px;top:106px;width:2px;height:17px;background:#5a5a5a"></div>
<div class="a" style="left:0px;top:181px;width:218px;height:5px;background:#f6f6f6"></div>
<div class="a" style="left:0px;top:191px;width:200px;height:18px;background:#fff"></div>
<div class="a" style="left:0px;top:209px;width:202px;height:237px;background:#fff"></div>
<div class="a" style="left:19px;top:191px;width:1px;height:18px;background:#ddd"></div>
<svg style="left:7px;top:198px" width="10" height="7"><path d="M0.5,6.5 L5,1 L9.5,6.5Z" fill="#9a9a9a"/></svg>
<div class="t" style="left:22.5px;top:195.3px;font-size:11px;color:#000;font-weight:normal;">Name</div>
<div class="a" style="left:0;top:209px;width:202px;height:237px;overflow:hidden">
<svg style="left:-3px;top:2.0px" width="19" height="16"><use href="#folder"/></svg>
<div class="t" style="left:22px;top:4.8px;font-size:11px;color:#000;font-weight:normal;">2D</div>
<div class="a" style="left:0px;top:20px;width:200px;height:1px;background:#ececec"></div>
<svg style="left:-3px;top:23.0px" width="19" height="16"><use href="#folder"/></svg>
<div class="t" style="left:22px;top:25.8px;font-size:11px;color:#000;font-weight:normal;">Akser</div>
<div class="a" style="left:0px;top:41px;width:200px;height:1px;background:#ececec"></div>
<svg style="left:-3px;top:44.0px" width="19" height="16"><use href="#folder"/></svg>
<div class="t" style="left:22px;top:46.8px;font-size:11px;color:#000;font-weight:normal;transform:scaleX(1.029);transform-origin:0 0;">Andre arealer</div>
<div class="a" style="left:0px;top:62px;width:200px;height:1px;background:#ececec"></div>
<svg style="left:-3px;top:65.0px" width="19" height="16"><use href="#folder"/></svg>
<div class="t" style="left:22px;top:67.8px;font-size:11px;color:#000;font-weight:normal;transform:scaleX(1.015);transform-origin:0 0;">Areal rom</div>
<div class="a" style="left:0px;top:83px;width:200px;height:1px;background:#ececec"></div>
<svg style="left:-3px;top:86.0px" width="19" height="16"><use href="#folder"/></svg>
<div class="t" style="left:22px;top:88.8px;font-size:11px;color:#000;font-weight:normal;transform:scaleX(1.030);transform-origin:0 0;">Arealer ute</div>
<div class="a" style="left:0px;top:104px;width:200px;height:1px;background:#ececec"></div>
<svg style="left:-3px;top:107.0px" width="19" height="16"><use href="#folder"/></svg>
<div class="t" style="left:22px;top:109.8px;font-size:11px;color:#000;font-weight:normal;transform:scaleX(1.058);transform-origin:0 0;">Balkongdør</div>
<div class="a" style="left:0px;top:125px;width:200px;height:1px;background:#ececec"></div>
<svg style="left:-3px;top:128.0px" width="19" height="16"><use href="#folder"/></svg>
<div class="t" style="left:22px;top:130.8px;font-size:11px;color:#000;font-weight:normal;transform:scaleX(1.015);transform-origin:0 0;">Belysning</div>
<div class="a" style="left:0px;top:146px;width:200px;height:1px;background:#ececec"></div>
<svg style="left:-3px;top:149.0px" width="19" height="16"><use href="#folder"/></svg>
<div class="t" style="left:22px;top:151.8px;font-size:11px;color:#000;font-weight:normal;transform:scaleX(1.062);transform-origin:0 0;">Brann og rømning</div>
<div class="a" style="left:0px;top:167px;width:200px;height:1px;background:#ececec"></div>
<svg style="left:-3px;top:170.0px" width="19" height="16"><use href="#folder"/></svg>
<div class="t" style="left:22px;top:172.8px;font-size:11px;color:#000;font-weight:normal;transform:scaleX(1.043);transform-origin:0 0;">Bygningsdeler</div>
<div class="a" style="left:0px;top:188px;width:200px;height:1px;background:#ececec"></div>
<svg style="left:-3px;top:191.0px" width="19" height="16"><use href="#folder"/></svg>
<div class="t" style="left:22px;top:193.8px;font-size:11px;color:#000;font-weight:normal;transform:scaleX(1.070);transform-origin:0 0;">Curtain wall</div>
<div class="a" style="left:0px;top:209px;width:200px;height:1px;background:#ececec"></div>
<svg style="left:-3px;top:212.0px" width="19" height="16"><use href="#folder"/></svg>
<div class="t" style="left:22px;top:214.8px;font-size:11px;color:#000;font-weight:normal;transform:scaleX(1.028);transform-origin:0 0;">Dekker</div>
<div class="a" style="left:0px;top:230px;width:200px;height:1px;background:#ececec"></div>
<svg style="left:-3px;top:233.0px" width="19" height="16"><use href="#folder"/></svg>
</div>
<div class="a" style="left:209px;top:226px;width:2px;height:44px;background:#5a5a5a"></div>
<svg style="left:4px;top:453px" width="20" height="19"><path d="M7.5,6 L9.3,10.5 L14,10.8 L10.4,13.8 L11.6,18 L7.5,15.6 L3.4,18 L4.6,13.8 L1,10.8 L5.7,10.5Z" fill="none" stroke="#9aa0a6" stroke-width="1"/><circle cx="14" cy="6" r="4.6" fill="#f0f0f0" stroke="#8ab4f8" stroke-width="1.1"/><path d="M14,3.5V8.5M11.5,6H16.5" stroke="#8ab4f8" stroke-width="1"/></svg>
<svg style="left:32px;top:454px" width="21" height="19"><path d="M1.5,18 V6.5 H6 M10,18 H19.5 V12" fill="none" stroke="#2a2a2a" stroke-width="1.2"/><path d="M1.5,18 H19.5" stroke="#2a2a2a" stroke-width="1.2"/><circle cx="13" cy="5.5" r="4.7" fill="#f0f0f0" stroke="#2d7ff9" stroke-width="1.2"/><path d="M13,3V8M10.5,5.5H15.5" stroke="#2d7ff9" stroke-width="1.1"/></svg>
<svg style="left:64px;top:455px" width="16" height="16"><path d="M2,2 L14,14 M14,2 L2,14" stroke="#f4a18f" stroke-width="1.6"/></svg>
<div class="a" style="left:133px;top:453px;width:82px;height:20px;background:#f7f7f7;border:1px solid #e4e4e4;border-radius:4px"></div>
<div class="t" style="left:154px;top:459.3px;font-size:11px;color:#8a8a8a;font-weight:normal;">Apply</div>
<div class="a" style="left:203px;top:455px;width:1px;height:16px;background:#666"></div>
<svg style="left:205px;top:459px" width="9" height="6"><path d="M0.5,0.5 H8 L4.25,5Z" fill="#9a9a9a"/></svg>
<div class="a" style="left:0px;top:478px;width:218px;height:1px;background:#dcdcdc"></div>
<div class="a" style="left:71px;top:484px;width:71px;height:1px;background:#6a6a6a"></div>
<svg style="left:2px;top:497px" width="20" height="15"><path d="M1,14 V7.5 L6,2 L12,3.5 L18,8.5 V14 Z M12,3.5 L12,8.5 M6,2 L12,8.5 H18 M12,14 V8.5" fill="none" stroke="#2a2a2a" stroke-width="1.1"/></svg>
<div class="a" style="left:32px;top:494px;width:1px;height:18px;background:#777"></div>
<div class="a" style="left:39px;top:489px;width:30px;height:29px;background:#cce4f7;border:1px solid #99ccf3;border-radius:3px"></div>
<svg style="left:44px;top:496px" width="20" height="15"><rect x="1" y="1" width="18" height="13" fill="none" stroke="#2a2a2a" stroke-width="1.3"/><path d="M3,12 V7 L7,3.5 L12,4.5 L16.5,8 V12 Z M12,4.5 L11.5,8 H16.5 M11.5,12 V8" fill="none" stroke="#2a2a2a" stroke-width="1"/></svg>
<svg style="left:74px;top:495px" width="20" height="17"><path d="M3,16 L1,14 L3,2.5 H17 V14 L15,16Z M3,2.5 L5,14 H17 M11,12 H17 V16 H11Z" fill="none" stroke="#2a2a2a" stroke-width="1.1"/></svg>
<svg style="left:106px;top:495px" width="16" height="18"><rect x="1" y="1" width="11" height="11" rx="1.5" fill="none" stroke="#2a2a2a" stroke-width="1.1"/><path d="M1,5 H12 M13.5,3 V14 H3 M15,5 V16 H5" fill="none" stroke="#2a2a2a" stroke-width="1.1"/></svg>
<div class="a" style="left:182px;top:493px;width:32px;height:21px;background:#fafafa;border:1px solid #dadada;border-radius:4px"></div>
<svg style="left:188px;top:498px" width="24" height="12"><path d="M1,1.5H13M1,5.5H13M1,9.5H13" stroke="#222" stroke-width="1.2"/><path d="M17,2 L21,5.5 L17,9Z" fill="#222"/></svg>
<div class="a" style="left:0px;top:524px;width:215px;height:22px;background:#fff;border-bottom:1.5px solid #5a5a5a"></div>
<svg style="left:2px;top:529px" width="14" height="14"><circle cx="6" cy="6" r="4.8" fill="none" stroke="#444" stroke-width="1.1"/><line x1="9.5" y1="9.5" x2="13" y2="13" stroke="#444" stroke-width="1.2"/></svg>
<div class="t" style="left:20px;top:532.3px;font-size:11px;color:#000;font-weight:normal;">per</div>
<svg style="left:199px;top:530px" width="12" height="11"><path d="M1,1 L11,10 M11,1 L1,10" stroke="#444" stroke-width="1.1"/></svg>
<div class="a" style="left:0px;top:547px;width:218px;height:545px;background:#fff"></div>
<div class="a" style="left:0px;top:791px;width:218px;height:22px;background:#d9d9d9"></div>
<svg style="left:2px;top:557.8px" width="10" height="7"><use href="#chev" /></svg>
<svg style="left:16px;top:551.3px" width="19" height="16"><use href="#navn" /></svg>
<div class="t" style="left:39px;top:555.1px;font-size:11px;color:#000;font-weight:normal;">Navn</div>
<svg style="left:12px;top:579.8px" width="10" height="7"><use href="#chev" /></svg>
<svg style="left:26px;top:572.8px" width="19" height="16"><use href="#folder" /></svg>
<div class="t" style="left:49px;top:577.1px;font-size:11px;color:#000;font-weight:normal;transform:scaleX(1.052);transform-origin:0 0;">Skjema og mengdeberegning</div>
<svg style="left:22px;top:601.8px" width="10" height="7"><use href="#chev" /></svg>
<svg style="left:36px;top:594.8px" width="19" height="16"><use href="#folder" /></svg>
<div class="t" style="left:59px;top:599.1px;font-size:11px;color:#000;font-weight:normal;transform:scaleX(1.047);transform-origin:0 0;">Konstruksjonselementer</div>
<svg style="left:49px;top:617.8px" width="14" height="15"><use href="#grid" /></svg>
<div class="t" style="left:69px;top:621.1px;font-size:11px;color:#000;font-weight:normal;transform:scaleX(1.024);transform-origin:0 0;">Liste taksperrer</div>
<svg style="left:22px;top:645.8px" width="10" height="7"><use href="#chev" /></svg>
<svg style="left:36px;top:638.8px" width="19" height="16"><use href="#folder" /></svg>
<div class="t" style="left:59px;top:643.1px;font-size:11px;color:#000;font-weight:normal;transform:scaleX(1.032);transform-origin:0 0;">Rom og andre arealer</div>
<svg style="left:49px;top:661.8px" width="14" height="15"><use href="#grid" /></svg>
<div class="t" style="left:69px;top:665.1px;font-size:11px;color:#000;font-weight:normal;transform:scaleX(1.019);transform-origin:0 0;">Romtyper</div>
<svg style="left:12px;top:689.8px" width="10" height="7"><use href="#chev" /></svg>
<svg style="left:26px;top:682.8px" width="19" height="16"><use href="#folder" /></svg>
<div class="t" style="left:49px;top:687.1px;font-size:11px;color:#000;font-weight:normal;transform:scaleX(1.051);transform-origin:0 0;">3D/Visualisering</div>
<svg style="left:37px;top:704.8px" width="17" height="17"><use href="#p3d" /></svg>
<div class="t" style="left:59px;top:709.1px;font-size:11px;color:#000;font-weight:normal;transform:scaleX(1.050);transform-origin:0 0;">Utv. perspektiv</div>
<svg style="left:37px;top:726.8px" width="17" height="17"><use href="#p3d" /></svg>
<div class="t" style="left:59px;top:731.1px;font-size:11px;color:#000;font-weight:normal;transform:scaleX(1.043);transform-origin:0 0;">Utv. perspektiv m/skygge</div>
<svg style="left:37px;top:748.8px" width="17" height="17"><use href="#p3d" /></svg>
<div class="t" style="left:59px;top:753.1px;font-size:11px;color:#000;font-weight:normal;transform:scaleX(1.055);transform-origin:0 0;">Innv. perspektiv</div>
<svg style="left:27px;top:770.8px" width="17" height="17"><use href="#p3d" /></svg>
<div class="t" style="left:49px;top:775.1px;font-size:11px;color:#000;font-weight:normal;">Generic Perspective</div>
<svg style="left:27px;top:792.8px" width="17" height="17"><use href="#p3d" /></svg>
<div class="t" style="left:49px;top:797.4px;font-size:10.5px;color:#000;font-weight:bold;">Generic Perspective</div>
<svg style="left:1px;top:1097px" width="22" height="20"><path d="M1.5,19 V9.5 H5.5 M9,19 H17 V13" fill="none" stroke="#2a2a2a" stroke-width="1.2"/><path d="M1.5,19 H17" stroke="#2a2a2a" stroke-width="1.2"/><path d="M4,18 V13.5 L7.5,10.5 L11,11.5 L14,14 V18 M11,11.5 V18" fill="none" stroke="#2a2a2a" stroke-width="1"/><circle cx="16" cy="6" r="4.8" fill="#f0f0f0" stroke="#2d7ff9" stroke-width="1.2"/><path d="M16,3.5V8.5M13.5,6H18.5" stroke="#2d7ff9" stroke-width="1.1"/></svg>
<svg style="left:31px;top:1097px" width="23" height="21"><path d="M5,19 H18 V13 M5,19 V9.5 H9" fill="none" stroke="#2a2a2a" stroke-width="1.2"/><path d="M7,18 V13.5 L10.5,10.5 L14,11.5 L17,14 V18 M14,11.5 V18" fill="none" stroke="#2a2a2a" stroke-width="1"/><path d="M1.5,20 Q1,15 5,14.5 L4,13 L7.5,15 L5,17.5 L5,16 Q3,16.5 3,20Z" fill="#2a2a2a"/><circle cx="17" cy="6" r="4.8" fill="#f0f0f0" stroke="#2d7ff9" stroke-width="1.2"/><path d="M17,3.5V8.5M14.5,6H19.5" stroke="#2d7ff9" stroke-width="1.1"/></svg>
<svg style="left:62px;top:1097px" width="22" height="20"><path d="M1.5,19 V8 Q1.5,7 2.5,7 H6 L8,9.5 M1.5,19 H16 V13" fill="none" stroke="#2a2a2a" stroke-width="1.2"/><circle cx="15.5" cy="6" r="4.8" fill="#f0f0f0" stroke="#2d7ff9" stroke-width="1.2"/><path d="M15.5,3.5V8.5M13,6H18" stroke="#2d7ff9" stroke-width="1.1"/></svg>
<svg style="left:94px;top:1102px" width="16" height="13"><rect x="1" y="1" width="14" height="11" rx="1" fill="none" stroke="#2d7ff9" stroke-width="1.3"/><path d="M1,3.5 H15 M4,6.5 H5 M7,6.5 H12 M4,9 H5 M7,9 H12" stroke="#2d7ff9" stroke-width="1.1"/></svg>
<div class="a" style="left:0px;top:1126px;width:216px;height:22px;background:#d9d9d9;border-radius:0 3px 3px 0"></div>
<svg style="left:3px;top:1133px" width="10" height="7"><path d="M1,1 H9 L5,6Z" fill="#333"/></svg>
<div class="t" style="left:21.3px;top:1131.8px;font-size:11px;color:#000;font-weight:normal;">Properties</div>
<svg style="left:0px;top:1149px" width="13" height="16"><use href="#p3d"/></svg>
<div class="a" style="left:18px;top:1151px;width:38px;height:17px;background:#fff;border-bottom:1px solid #9a9a9a;border-radius:2px 2px 0 0"></div>
<div class="a" style="left:60px;top:1150px;width:155px;height:18px;background:#fff;border-bottom:1px solid #9a9a9a;border-radius:2px 2px 0 0"></div>
<div class="t" style="left:64.4px;top:1155.3px;font-size:11px;color:#000;font-weight:normal;">Generic Perspective</div>
<svg style="left:0px;top:1173px" width="15" height="15"><path d="M1,4.5 L5,1.5 H14 L10,4.5Z M1,8 H10 L14,5 M1,11.5 H10 L14,8.5 M1,4.5 V11.5 M10,4.5 V11.5" fill="none" stroke="#2a2a2a" stroke-width="1.1"/></svg>
<div class="t" style="left:17.5px;top:1176.3px;font-size:11px;color:#000;font-weight:normal;">Custom</div>
<svg style="left:0px;top:1196px" width="15" height="10"><path d="M0,1 H13.5 V8.5 H0 M3,8.5 V6 M6,8.5 V5 M9,8.5 V6 M12,8.5 V6" fill="none" stroke="#2a2a2a" stroke-width="1.1"/></svg>
<div class="t" style="left:17.5px;top:1197.3px;font-size:11px;color:#000;font-weight:normal;">1:100</div>
<svg style="left:0px;top:1214px" width="15" height="16"><path d="M0,4.5 H3 L5,1.5 H10 L12,4.5 H13.5 V14.5 H0" fill="none" stroke="#2a2a2a" stroke-width="1.1"/><circle cx="7" cy="9.5" r="3.2" fill="none" stroke="#2a2a2a" stroke-width="1.1"/></svg>
<div class="t" style="left:17.5px;top:1217.8px;font-size:11px;color:#000;font-weight:normal;">3D Window</div>
<div class="a" style="left:0px;top:1235px;width:214px;height:20px;background:#fcfcfc;border:1px solid #e0e0e0;border-radius:4px"></div>
<div class="t" style="left:80px;top:1241.3px;font-size:11px;color:#000;font-weight:normal;">Settings...</div>
<div class="a" style="left:0px;top:785px;width:207px;height:55px;border:3.2px solid #f4474b;box-shadow:1px 3px 4px rgba(0,0,0,0.35), inset 1px 2px 3px rgba(0,0,0,0.25)"></div>
<div class="a" style="left:60px;top:1147px;width:147px;height:25px;border:3.2px solid #f4474b;box-shadow:1px 3px 4px rgba(0,0,0,0.35), inset 1px 2px 3px rgba(0,0,0,0.25)"></div>
<svg style="left:0;top:0" width="220" height="1200"><path d="M130,825 L138,825 L136.7,1122 L148,1115 L132.5,1146 L116.5,1115 L128,1122 Z" fill="#f45356"/></svg>
<svg style="left:125px;top:1101px" width="14" height="16"><path d="M1,1.5 L13,14.5 M13,1.5 L1,14.5" stroke="#ff4a3a" stroke-width="1.7" stroke-opacity="0.9"/></svg>
<!--LEFT_END-->

<!-- toolbox -->
<!--TOOLBOX_START-->
<div class="a" style="left:219px;top:116px;width:47px;height:1122px;background:#f0f0f0"></div>
<div class="a" style="left:266px;top:116px;width:1px;height:1122px;background:#dadada"></div>
<div class="a" style="left:234px;top:120px;width:17px;height:1px;background:#777"></div>
<div class="a" style="left:219px;top:125px;width:47px;height:27px;background:#cce4f7;border:1px solid #99ccf3;border-radius:3px"></div>
<svg style="left:235px;top:129px" width="16" height="19"><path d="M2,1.5 L14,10 L8.8,10.5 L11.5,16 L9.3,17 L6.8,11.5 L2.5,14.8Z" fill="#8c8c8c" stroke="#222" stroke-width="1.1" stroke-linejoin="round"/></svg>
<svg style="left:232px;top:160px" width="22" height="18"><rect x="1.5" y="1.5" width="18" height="14" fill="none" stroke="#2a2a2a" stroke-width="1.1" stroke-dasharray="2.5,1.5"/></svg>
<div class="a" style="left:219px;top:188px;width:47px;height:20px;background:#d9d9d9;border-radius:4px"></div>
<div class="t" style="left:221.5px;top:193.8px;font-size:11px;color:#000;font-weight:normal;">Design</div>
<svg style="left:231px;top:212.5px" width="23" height="23" viewBox="0 0 20 20"><g fill="none" stroke="#2a2a2a" stroke-width="0.95" stroke-linejoin="round"><path d="M2,5 L17,2 V14 L2,17Z"/></g></svg>
<svg style="left:231px;top:242.5px" width="23" height="23" viewBox="0 0 20 20"><g fill="none" stroke="#2a2a2a" stroke-width="0.95" stroke-linejoin="round"><path d="M2,5 L17,2 V14 L2,17Z M8,4 V16"/></g></svg>
<svg style="left:231px;top:273.5px" width="23" height="23" viewBox="0 0 20 20"><g fill="none" stroke="#2a2a2a" stroke-width="0.95" stroke-linejoin="round"><path d="M5,3 L14,1 V16 L5,18Z M8,9 L10,8.5"/></g></svg>
<svg style="left:231px;top:302.5px" width="23" height="23" viewBox="0 0 20 20"><g fill="none" stroke="#2a2a2a" stroke-width="0.95" stroke-linejoin="round"><path d="M3,3 L16,2 V16 L3,17Z M9.5,2.5 V16.5 M3,10 L16,9"/></g></svg>
<svg style="left:231px;top:332.5px" width="23" height="23" viewBox="0 0 20 20"><g fill="none" stroke="#2a2a2a" stroke-width="0.95" stroke-linejoin="round"><path d="M3,4 L16,2 V14 L3,17Z M9.5,3 V15.5 M3,17 L16,14"/></g></svg>
<svg style="left:231px;top:362.5px" width="23" height="23" viewBox="0 0 20 20"><g fill="none" stroke="#2a2a2a" stroke-width="0.95" stroke-linejoin="round"><path d="M2,4 L9,2 L17,8 L10,11Z M2,8 L10,14 L17,11 M2,8 L10,11" /><path d="M2,12 L10,17 L17,12"/></g></svg>
<svg style="left:231px;top:392.5px" width="23" height="23" viewBox="0 0 20 20"><g fill="none" stroke="#2a2a2a" stroke-width="0.95" stroke-linejoin="round"><path d="M1,5 L14,3 L18,5 V15 L5,17 L1,15Z M5,7 V17 M1,10 L18,8 M10,4 V16 M14,3 V15"/></g></svg>
<svg style="left:231px;top:422.5px" width="23" height="23" viewBox="0 0 20 20"><g fill="none" stroke="#2a2a2a" stroke-width="0.95" stroke-linejoin="round"><path d="M1,8 L6,3 H14 L18,9 L12,9 L9,4 M1,8 L5,13 L10,5"/></g></svg>
<svg style="left:231px;top:452.5px" width="23" height="23" viewBox="0 0 20 20"><g fill="none" stroke="#2a2a2a" stroke-width="0.95" stroke-linejoin="round"><path d="M1,5 Q8,10 18,2 L16,15 L11,12 L5,17Z M11,12 L18,2"/></g></svg>
<svg style="left:231px;top:482.5px" width="23" height="23" viewBox="0 0 20 20"><g fill="none" stroke="#2a2a2a" stroke-width="0.95" stroke-linejoin="round"><path d="M2,2 L17,8 V13 L2,6Z M2,2 V6 M17,8 L15,9"/></g></svg>
<svg style="left:231px;top:513.5px" width="23" height="23" viewBox="0 0 20 20"><g fill="none" stroke="#2a2a2a" stroke-width="0.95" stroke-linejoin="round"><rect x="6" y="2" width="7" height="16" rx="3.5"/><path d="M6,5 Q9.5,7 13,5"/></g></svg>
<svg style="left:231px;top:542.5px" width="23" height="23" viewBox="0 0 20 20"><g fill="none" stroke="#2a2a2a" stroke-width="0.95" stroke-linejoin="round"><path d="M1,12 L5,8 H9 V6 L13,4 L19,8 L7,14Z"/></g></svg>
<svg style="left:231px;top:572.5px" width="23" height="23" viewBox="0 0 20 20"><g fill="none" stroke="#2a2a2a" stroke-width="0.95" stroke-linejoin="round"><path d="M1,4 L6,3 L9,6 L14,9 L17,11 L9,15 L7,12 L5,9 L3,7Z M1,4 L3,7 M6,3 L8,9 M9,6 L12,12"/></g></svg>
<svg style="left:231px;top:602.5px" width="23" height="23" viewBox="0 0 20 20"><g fill="none" stroke="#2a2a2a" stroke-width="0.95" stroke-linejoin="round"><path d="M2,16 V6 L18,2 V10 L2,14 M2,10 L18,6 M9,4.5 V12"/></g></svg>
<svg style="left:231px;top:632.5px" width="23" height="23" viewBox="0 0 20 20"><g fill="none" stroke="#2a2a2a" stroke-width="0.95" stroke-linejoin="round"><path d="M0,5 L8,4 Q15,4 18,12 L11,16 Q6,8 0,5 M4,6 L12,14 M8,4 L15,13 M3,9 L16,7 M7,12 L18,10"/></g></svg>
<svg style="left:231px;top:662.5px" width="23" height="23" viewBox="0 0 20 20"><g fill="none" stroke="#2a2a2a" stroke-width="0.95" stroke-linejoin="round"><path d="M3,4 L16,2 V15 L3,17Z M3,8 L16,6 M3,12 L16,10 M8,3 V16 M12,2.5 V15.5"/></g></svg>
<svg style="left:231px;top:692.5px" width="23" height="23" viewBox="0 0 20 20"><g fill="none" stroke="#2a2a2a" stroke-width="0.95" stroke-linejoin="round"><path d="M3,2 H8 Q8,6 11,6 V2 H13 V8 H17 V17 H13 V15 H7 V17 H3Z M7,11 H13 M7,13 H13"/></g></svg>
<svg style="left:231px;top:722.5px" width="23" height="23" viewBox="0 0 20 20"><g fill="none" stroke="#2a2a2a" stroke-width="0.95" stroke-linejoin="round"><path d="M5,1 L11,3 V9 L16,10 V16 M5,1 V17 M5,9 H11 L16,10 M11,12 V17 M5,9 L11,12"/></g></svg>
<svg style="left:231px;top:752.5px" width="23" height="23" viewBox="0 0 20 20"><g fill="none" stroke="#2a2a2a" stroke-width="0.95" stroke-linejoin="round"><path d="M10,5 Q6,5 6,9 Q6,12 8,13 V16 H12 V13 Q14,12 14,9 Q14,5 10,5 M9,10 L10,8 L11,10 M8,16 Q10,18 12,16 M2,3 L4,5 M18,3 L16,5 M1,10 H3 M17,10 H19 M3,15 L4,14 M17,15 L16,14 M10,1 V2"/></g></svg>
<svg style="left:231px;top:782.5px" width="23" height="23" viewBox="0 0 20 20"><g fill="none" stroke="#2a2a2a" stroke-width="0.95" stroke-linejoin="round"><path d="M4,6 L11,2 L16,5 V15 L10,18 L4,15Z M4,6 L10,9 L16,5 M10,9 V18 M6,16 V18 M12,5 L13,4"/></g></svg>
<svg style="left:231px;top:811.5px" width="23" height="23" viewBox="0 0 20 20"><g fill="none" stroke="#2a2a2a" stroke-width="0.95" stroke-linejoin="round"><circle cx="10" cy="6" r="4.5"/><path d="M9.5,4.5 L10.5,4 V8 M10,11 V19" stroke-dasharray="2,1.5"/></g></svg>
<svg style="left:231px;top:842.5px" width="23" height="23" viewBox="0 0 20 20"><g fill="none" stroke="#2a2a2a" stroke-width="0.95" stroke-linejoin="round"><path d="M4,9 Q6,2 14,2 L13,9 L16,11 L11,18 Q3,15 4,9 M13,2 Q8,10 11,18"/></g></svg>
<div class="a" style="left:219px;top:874px;width:47px;height:20px;background:#d9d9d9;border-radius:4px"></div>
<div class="t" style="left:221.5px;top:879.3px;font-size:11px;color:#000;font-weight:normal;">Docume</div>
<div class="a" style="left:219px;top:895px;width:47px;height:341px;overflow:hidden">
<svg style="left:12px;top:4.5px" width="23" height="23" viewBox="0 0 20 20"><g fill="none" stroke="#7a7a7a" stroke-width="0.95" stroke-linejoin="round"><path d="M2,9 H11 V12 M11,14 V15 M9,15 H18 M4,7 L5,5 L6,7Z M13,13 L14.5,11 L16,13Z" /><path d="M3.5,7 L5,4.8 L6.5,7Z M12.5,13 L14.5,10.5 L16.5,13Z" fill="#7a7a7a"/></g></svg>
<svg style="left:12px;top:33.5px" width="23" height="23" viewBox="0 0 20 20"><g fill="none" stroke="#7a7a7a" stroke-width="0.95" stroke-linejoin="round"><path d="M1,14 H19"/><path d="M7,11 L10,7 L13,11Z" fill="#7a7a7a"/></g></svg>
<svg style="left:12px;top:64.5px" width="23" height="23" viewBox="0 0 20 20"><g fill="none" stroke="#7a7a7a" stroke-width="0.95" stroke-linejoin="round"><path d="M1,12 H19 M3,9.5 V14.5 M17,9.5 V14.5"/><text x="6" y="7" font-size="6" fill="#7a7a7a" stroke="none" font-family="Liberation Sans">1.2</text></g></svg>
<svg style="left:12px;top:94.5px" width="23" height="23" viewBox="0 0 20 20"><g fill="none" stroke="#7a7a7a" stroke-width="0.95" stroke-linejoin="round"><path d="M1,17 L13,6 M1,17 H17 M9,10 Q12,12 12,15 M11,15 L12,16 L13,14"/><text x="14" y="7" font-size="8" fill="#7a7a7a" stroke="none" font-family="Liberation Sans">&#945;</text></g></svg>
<svg style="left:12px;top:124.5px" width="23" height="23" viewBox="0 0 20 20"><g fill="none" stroke="#7a7a7a" stroke-width="0.95" stroke-linejoin="round"><circle cx="9" cy="11" r="5.5"/><path d="M9,3 V19 M1,11 H17"/><text x="12" y="5" font-size="6" fill="#7a7a7a" stroke="none" font-family="Liberation Sans">1.2</text></g></svg>
<svg style="left:12px;top:154.5px" width="23" height="23" viewBox="0 0 20 20"><g fill="none" stroke="#7a7a7a" stroke-width="0.95" stroke-linejoin="round"><path d="M2,10 Q8,11 9,19 M7,12 L15,6 H19 M7,12 L8,9 M7,12 L10,12"/><text x="12" y="5" font-size="6" fill="#7a7a7a" stroke="none" font-family="Liberation Sans">1.2</text></g></svg>
<svg style="left:12px;top:184.5px" width="23" height="23" viewBox="0 0 20 20"><g fill="none" stroke="#7a7a7a" stroke-width="0.95" stroke-linejoin="round"><path d="M3,18 L10,2 L17,18 M5.5,12.5 H14.5"/></g></svg>
<svg style="left:12px;top:214.5px" width="23" height="23" viewBox="0 0 20 20"><g fill="none" stroke="#7a7a7a" stroke-width="0.95" stroke-linejoin="round"><path d="M1,17 L7,11 M1,17 V13 M1,17 H5"/><text x="7" y="15" font-size="11" fill="#7a7a7a" stroke="none" font-family="Liberation Sans">A1</text></g></svg>
<svg style="left:12px;top:244.5px" width="23" height="23" viewBox="0 0 20 20"><g fill="none" stroke="#7a7a7a" stroke-width="0.95" stroke-linejoin="round"><path d="M2,16 V7 L5,3 H14 L10,9 L18,16Z M3,10 L7,4 M3,14 L10,4 M6,15 L11,8 M9,15 L13,10 M13,15 L15,13"/></g></svg>
<svg style="left:12px;top:274.5px" width="23" height="23" viewBox="0 0 20 20"><g fill="none" stroke="#7a7a7a" stroke-width="0.95" stroke-linejoin="round"><path d="M3,17 L17,3"/></g></svg>
<svg style="left:12px;top:304.5px" width="23" height="23" viewBox="0 0 20 20"><g fill="none" stroke="#7a7a7a" stroke-width="0.95" stroke-linejoin="round"><circle cx="10" cy="10" r="8"/></g></svg>
<svg style="left:12px;top:334.5px" width="23" height="23" viewBox="0 0 20 20"><g fill="none" stroke="#7a7a7a" stroke-width="0.95" stroke-linejoin="round"><path d="M4,8 Q6,3 10,3 H17 L15,6"/></g></svg>
</div>
<div class="a" style="left:219px;top:1239px;width:47px;height:21px;background:#d9d9d9;border-radius:4px 4px 0 0"></div>
<div class="t" style="left:221px;top:1244.3px;font-size:11px;color:#000;font-weight:normal;">More</div>
<!--TOOLBOX_END-->

<!--BOTTOM_START-->
<div class="a" style="left:267px;top:1240px;width:1440px;height:20px;background:#f0f0f0"></div>
<div class="a" style="left:0px;top:1259px;width:1707px;height:1px;background:#d9d9d9"></div>
<div class="a" style="left:0px;top:1260px;width:1707px;height:33px;background:#f0f0f0"></div>
<svg style="left:269px;top:1241px" width="19" height="19"><g fill="none" stroke="#222" stroke-width="1.3" stroke-linejoin="round" stroke-linecap="round"><circle cx="10" cy="8" r="6"/><path d="M6,12 L2,17 M2,8 H8 M4.5,5.5 L2,8 L4.5,10.5"/></g></svg>
<svg style="left:292px;top:1241px" width="19" height="19"><g fill="none" stroke="#b5b5b5" stroke-width="1.3" stroke-linejoin="round" stroke-linecap="round"><circle cx="9" cy="8" r="6"/><path d="M13,12 L16,16 M11,8 H18 M15.5,5.5 L18,8 L15.5,10.5"/></g></svg>
<svg style="left:316px;top:1241px" width="18" height="19"><g fill="none" stroke="#222" stroke-width="1.3" stroke-linejoin="round" stroke-linecap="round"><circle cx="8" cy="7.5" r="6"/><path d="M12.5,12 L16,16 M8,4.5 V10.5 M5,7.5 H11"/></g></svg>
<div class="a" style="left:338px;top:1240px;width:1px;height:19px;background:#9a9a9a"></div>
<svg style="left:345px;top:1242px" width="17" height="18"><g fill="none" stroke="#222" stroke-width="1.3" stroke-linejoin="round" stroke-linecap="round"><path d="M8,13 Q1,12 1,8 Q1,3 8,3 Q15,3 15,8 Q15,11 11,12 M10,10 L8,13 L10,16"/></g></svg>
<svg style="left:370px;top:1242px" width="12" height="18"><g fill="none" stroke="#222" stroke-width="1.3" stroke-linejoin="round" stroke-linecap="round"><circle cx="6.5" cy="2.5" r="1.5" fill="#222"/><path d="M6,5 L4,10 L2,13 M5,8 L8,10 M4.5,9.5 L7,12 L8,16 M6,5 L9,8"/></g></svg>
<div class="a" style="left:389px;top:1240px;width:1px;height:19px;background:#9a9a9a"></div>
<svg style="left:395px;top:1241px" width="18" height="19"><g fill="none" stroke="#222" stroke-width="1.2" stroke-linejoin="round" stroke-linecap="round"><circle cx="8" cy="8" r="6.5"/><path d="M12.5,12.5 L16.5,16.5 M8,3.5 L6.5,5 H9.5Z M8,12.5 L6.5,11 H9.5Z M3.5,8 L5,6.5 V9.5Z M12.5,8 L11,6.5 V9.5Z"/></g></svg>
<div class="t" style="left:449px;top:1245.3px;font-size:11px;color:#8c8c8c;font-weight:normal;">N/A</div>
<svg style="left:500.5px;top:1245.5px" width="6" height="8"><path d="M0.5,0.3 L4.8,3.9 L0.5,7.5Z" fill="#8c8c8c"/></svg>
<div class="a" style="left:511px;top:1240px;width:1px;height:19px;background:#9a9a9a"></div>
<svg style="left:518px;top:1243px" width="16" height="16"><g fill="none" stroke="#aaa" stroke-width="1.2" stroke-linejoin="round" stroke-linecap="round"><path d="M1,7 L6,2 L11,7 L6,12Z M9,14 Q13,13 12,8 M10.5,9.5 L12,8 L13.5,10"/></g></svg>
<div class="t" style="left:571px;top:1245.3px;font-size:11px;color:#8c8c8c;font-weight:normal;">N/A</div>
<svg style="left:622.5px;top:1245.5px" width="6" height="8"><path d="M0.5,0.3 L4.8,3.9 L0.5,7.5Z" fill="#8c8c8c"/></svg>
<div class="a" style="left:633px;top:1240px;width:1px;height:19px;background:#9a9a9a"></div>
<svg style="left:639px;top:1245px" width="17" height="10"><g fill="none" stroke="#222" stroke-width="1.3" stroke-linejoin="round" stroke-linecap="round"><rect x="1" y="1" width="15" height="7"/><path d="M4,8 V5.5 M7,8 V4.5 M10,8 V5.5 M13,8 V4.5"/></g></svg>
<div class="t" style="left:689.5px;top:1245.3px;font-size:11px;color:#000;font-weight:normal;">1:100</div>
<svg style="left:743.5px;top:1245.5px" width="6" height="8"><path d="M0.5,0.3 L4.8,3.9 L0.5,7.5Z" fill="#222"/></svg>
<div class="a" style="left:755px;top:1240px;width:1px;height:19px;background:#9a9a9a"></div>
<svg style="left:761px;top:1242px" width="18" height="16"><g fill="none" stroke="#222" stroke-width="1.3" stroke-linejoin="round" stroke-linecap="round"><path d="M1.5,6 L6.5,1 H16.5 M1.5,6 H16.5 L12,10 M1.5,9.5 L4,7 M1.5,9.5 H16.5 M1.5,13 L4,10.5 M1.5,13 H16.5" stroke-width="1.5"/></g></svg>
<div class="t" style="left:805.5px;top:1245.3px;font-size:11px;color:#000;font-weight:normal;">Custom</div>
<svg style="left:865.5px;top:1245.5px" width="6" height="8"><path d="M0.5,0.3 L4.8,3.9 L0.5,7.5Z" fill="#222"/></svg>
<div class="a" style="left:877px;top:1240px;width:1px;height:19px;background:#9a9a9a"></div>
<svg style="left:883px;top:1243px" width="17" height="15"><g fill="none" stroke="#222" stroke-width="1.2" stroke-linejoin="round" stroke-linecap="round"><rect x="1.5" y="1.5" width="13" height="11"/><path d="M1.5,4.5 H14.5 M4,12 L9,5 M8,12 L13,5 M2,9 L5,5"/></g></svg>
<div class="t" style="left:914px;top:1245.3px;font-size:11px;color:#000;font-weight:normal;">Entire Model</div>
<svg style="left:989.5px;top:1245.5px" width="6" height="8"><path d="M0.5,0.3 L4.8,3.9 L0.5,7.5Z" fill="#222"/></svg>
<div class="a" style="left:999px;top:1240px;width:1px;height:19px;background:#9a9a9a"></div>
<svg style="left:1008px;top:1242px" width="9" height="17"><g fill="none" stroke="#222" stroke-width="1.2" stroke-linejoin="round" stroke-linecap="round"><path d="M2,1 V10 L4.5,15 L7,10 V1 M2,10 H7"/></g></svg>
<div class="t" style="left:1030px;top:1245.3px;font-size:11px;color:#000;font-weight:normal;">02 Penner 1:1...</div>
<svg style="left:1111.5px;top:1245.5px" width="6" height="8"><path d="M0.5,0.3 L4.8,3.9 L0.5,7.5Z" fill="#222"/></svg>
<div class="a" style="left:1121px;top:1240px;width:1px;height:19px;background:#9a9a9a"></div>
<svg style="left:1127px;top:1244px" width="17" height="13"><g fill="none" stroke="#222" stroke-width="1.2" stroke-linejoin="round" stroke-linecap="round"><rect x="1" y="1" width="15" height="10"/><rect x="4" y="4" width="9" height="4"/></g></svg>
<div class="t" style="left:1152px;top:1245.3px;font-size:11px;color:#000;font-weight:normal;">02 Byggesøk...</div>
<svg style="left:1232.5px;top:1245.5px" width="6" height="8"><path d="M0.5,0.3 L4.8,3.9 L0.5,7.5Z" fill="#222"/></svg>
<div class="a" style="left:1243px;top:1240px;width:1px;height:19px;background:#9a9a9a"></div>
<svg style="left:1249px;top:1242px" width="18" height="18"><g fill="none" stroke="#222" stroke-width="1.2" stroke-linejoin="round" stroke-linecap="round"><path d="M2,16 V6 H7 M10,16 H16 V9 M8,9 H13 V16 H8Z M9,3 Q12,0 15,3 M13,3 H15.5 V0.5"/></g></svg>
<div class="t" style="left:1274px;top:1245.3px;font-size:11px;color:#000;font-weight:normal;">02 Byggesøk...</div>
<svg style="left:1354.5px;top:1245.5px" width="6" height="8"><path d="M0.5,0.3 L4.8,3.9 L0.5,7.5Z" fill="#222"/></svg>
<div class="a" style="left:1365px;top:1240px;width:1px;height:19px;background:#9a9a9a"></div>
<svg style="left:1371px;top:1242px" width="17" height="18"><g fill="none" stroke="#222" stroke-width="1.2" stroke-linejoin="round" stroke-linecap="round"><path d="M1,16 L8,2 L15,8 V16Z M8,2 L10,16 M10,10 H13 V16"/></g></svg>
<div class="t" style="left:1408px;top:1245.3px;font-size:11px;color:#000;font-weight:normal;">01 Nybygg</div>
<svg style="left:1476.5px;top:1245.5px" width="6" height="8"><path d="M0.5,0.3 L4.8,3.9 L0.5,7.5Z" fill="#222"/></svg>
<div class="a" style="left:1487px;top:1240px;width:1px;height:19px;background:#9a9a9a"></div>
<svg style="left:1493px;top:1242px" width="17" height="18"><g fill="none" stroke="#222" stroke-width="1.2" stroke-linejoin="round" stroke-linecap="round"><path d="M1,9 V5 L4,1 L6,2 M2.5,12 V7 L6,3 L8,4 M5,16 V10 L9,5 L16,7 V16Z M8,12 H10 V14 H8Z M12,16 V11 H14 V16"/></g></svg>
<div class="t" style="left:1518px;top:1245.3px;font-size:11px;color:#000;font-weight:normal;">Main Model ...</div>
<svg style="left:1597.5px;top:1245.5px" width="6" height="8"><path d="M0.5,0.3 L4.8,3.9 L0.5,7.5Z" fill="#222"/></svg>
<div class="a" style="left:1608px;top:1240px;width:1px;height:19px;background:#9a9a9a"></div>
<svg style="left:1615px;top:1243px" width="14" height="15"><g fill="none" stroke="#222" stroke-width="1.2" stroke-linejoin="round" stroke-linecap="round"><path d="M1,5 L4,1.5 H12 V10 L9,13.5 H1Z M1,5 H9 V13.5 M9,5 L12,1.5"/></g></svg>
<div class="t" style="left:1639px;top:1245.3px;font-size:11px;color:#000;font-weight:normal;">Simple Shadi...</div>
<svg style="left:9px;top:1268px" width="20" height="20"><g fill="none" stroke="#222" stroke-width="1.2" stroke-linejoin="round" stroke-linecap="round"><path d="M1,5 Q8,-1 15,5 Q8,10 1,5Z"/><circle cx="8" cy="4.8" r="1.8" fill="#222"/><path d="M1,15 Q8,9 15,15 Q8,20 1,15Z M3,19 L14,11 M16,3 Q19,6 17,10 M17,10 L15,9 M15,12 Q12,13 13,15"/></g></svg>
<svg style="left:38px;top:1268px" width="21" height="20"><g fill="none" stroke="#222" stroke-width="1.2" stroke-linejoin="round" stroke-linecap="round"><rect x="1" y="9" width="7" height="8" rx="3"/><path d="M2.5,9 V6 Q4.5,3 6.5,6 V9 M4.5,12 V14"/><rect x="11" y="5" width="8" height="8" rx="3"/><path d="M12.5,5 V2 Q15,-1 17.5,2 M15,8 V10 M12,17 Q15,19 18,16 M16,16 H18 V14"/></g></svg>
<div class="a" style="left:66px;top:1263px;width:1px;height:29px;background:#6e6e6e"></div>
<div class="t" style="left:69.5px;top:1266.3px;font-size:11px;color:#000;font-weight:normal;">Selection's Layer:</div>
<svg style="left:76px;top:1279px" width="16" height="13"><g fill="none" stroke="#b0b0b0" stroke-width="1.2" stroke-linejoin="round" stroke-linecap="round"><path d="M1,6 Q8,0 15,6 Q8,12 1,6Z M2,12 L13,1"/></g></svg>
<svg style="left:109px;top:1279px" width="10" height="13"><g fill="none" stroke="#b0b0b0" stroke-width="1.1" stroke-linejoin="round" stroke-linecap="round"><rect x="1" y="5" width="7" height="7" rx="2.5"/><path d="M2.5,5 V3.5 Q4.5,0.5 6.5,3.5 V5 M4.5,8 V9.5"/></g></svg>
<svg style="left:137px;top:1279px" width="12" height="13"><g fill="none" stroke="#b0b0b0" stroke-width="1.1" stroke-linejoin="round" stroke-linecap="round"><rect x="3" y="5" width="7" height="7" rx="2.5"/><path d="M1,4 Q2,0.5 4.5,2 M6.5,8 V9.5"/></g></svg>
<div class="a" style="left:161px;top:1263px;width:1px;height:29px;background:#6e6e6e"></div>
<div class="t" style="left:164px;top:1266.3px;font-size:11px;color:#000;font-weight:normal;">All Layers:</div>
<svg style="left:170px;top:1279px" width="17" height="13"><g fill="none" stroke="#222" stroke-width="1.4" stroke-linejoin="round" stroke-linecap="round"><path d="M1,6 Q8,0 15,6 Q8,12 1,6Z M2,12 L13,1"/></g></svg>
<svg style="left:205px;top:1279px" width="10" height="13"><g fill="none" stroke="#222" stroke-width="1.3" stroke-linejoin="round" stroke-linecap="round"><rect x="1" y="5" width="7" height="7" rx="2.5"/><path d="M2.5,5 V3.5 Q4.5,0.5 6.5,3.5 V5 M4.5,8 V9.5"/></g></svg>
<div class="a" style="left:256px;top:1263px;width:1px;height:29px;background:#6e6e6e"></div>
<svg style="left:266px;top:1265px" width="17" height="24"><g fill="none" stroke="#b0b0b0" stroke-width="1.2" stroke-linejoin="round" stroke-linecap="round"><path d="M4,7 Q5,2 10,3 Q13,4 13,7 M13,7 L10.5,6 M13,7 L14,4.5"/><path d="M12,16 Q11,21 6,20 Q3,19 3,16 M3,16 L5.5,17 M3,16 L2,18.5"/></g></svg>
<div class="a" style="left:313px;top:1270px;width:1px;height:15px;background:#6e6e6e"></div>
<svg style="left:323px;top:1268px" width="19" height="19"><g fill="none" stroke="#222" stroke-width="1.3" stroke-linejoin="round" stroke-linecap="round"><circle cx="9" cy="9" r="7.5"/><path d="M9,7.5 V13.5" stroke-width="2"/><circle cx="9" cy="4.8" r="1.1" fill="#222"/></g></svg>
<svg style="left:351px;top:1275px" width="8" height="5"><path d="M0,0 H7.5 L3.75,4.5Z" fill="#222"/></svg>
<div class="a" style="left:364px;top:1263px;width:1px;height:29px;background:#6e6e6e"></div>
<svg style="left:372px;top:1268px" width="20" height="20"><g fill="none" stroke="#222" stroke-width="1.3" stroke-linejoin="round" stroke-linecap="round"><rect x="1" y="1" width="17" height="17"/><path d="M1,3.5 H18" stroke-width="2"/><path d="M4,7 H8 Q8,9 10,9 V11 H16 V16 H4Z M11,12 V15 M13,12 V15"/></g></svg>
<svg style="left:397px;top:1268px" width="19" height="20"><g fill="none" stroke="#222" stroke-width="1.3" stroke-linejoin="round" stroke-linecap="round"><path d="M1,9 L9,2 L17,9 M3,7.5 V18 H15 V7.5 M6,18 V13 H8 V18"/><path d="M12,8 V16 M10,13.5 L12,16 L14,13.5" stroke="#2d7ff9" stroke-width="1.4"/></g></svg>
<svg style="left:422px;top:1268px" width="19" height="20"><g fill="none" stroke="#222" stroke-width="1.3" stroke-linejoin="round" stroke-linecap="round"><path d="M1,9 L9,2 L17,9 M3,7.5 V18 H15 V7.5 M6,18 V13 H8 V18"/><path d="M12,16 V8 M10,10.5 L12,8 L14,10.5" stroke="#2d7ff9" stroke-width="1.4"/></g></svg>
<svg style="left:447px;top:1268px" width="20" height="20"><g fill="none" stroke="#222" stroke-width="1.3" stroke-linejoin="round" stroke-linecap="round"><path d="M1,8 L7,2 L12,6 M3,6.5 V18 H9 M6,18 V13 H8"/><rect x="9" y="10" width="10" height="8" rx="1" fill="#fff" stroke="#2d7ff9" stroke-width="1.3"/><path d="M11,13 H11.5 M13,13 H17 M11,15.5 H11.5 M13,15.5 H17" stroke="#2d7ff9"/></g></svg>
<div class="a" style="left:472px;top:1263px;width:1px;height:29px;background:#6e6e6e"></div>
<svg style="left:481px;top:1270px" width="17" height="16"><g fill="none" stroke="#9a9a9a" stroke-width="1.1" stroke-linejoin="round" stroke-linecap="round"><path d="M2,2 H14 L8,10Z M0,14 H16"/></g></svg>
<svg style="left:513px;top:1270px" width="14" height="14"><g fill="none" stroke="#9a9a9a" stroke-width="1.1" stroke-linejoin="round" stroke-linecap="round"><path d="M1,2 H12 L6.5,10Z"/></g></svg>
<svg style="left:537px;top:1270px" width="14" height="14"><g fill="none" stroke="#9a9a9a" stroke-width="1.1" stroke-linejoin="round" stroke-linecap="round"><path d="M1,10 H12 L6.5,2Z"/></g></svg>
<svg style="left:556px;top:1268px" width="17" height="16"><g fill="none" stroke="#9a9a9a" stroke-width="1.1" stroke-linejoin="round" stroke-linecap="round"><path d="M0,1 H16 M2,13 H14 L8,5Z"/></g></svg>
<div class="a" style="left:580px;top:1263px;width:1px;height:29px;background:#6e6e6e"></div>
<div class="a" style="left:586px;top:1261px;width:25px;height:31px;background:#cce4f7;border:1px solid #99ccf3;border-radius:3px"></div>
<svg style="left:589px;top:1268px" width="20" height="20"><g fill="none" stroke="#222" stroke-width="1.3" stroke-linejoin="round" stroke-linecap="round"><rect x="1" y="1" width="17" height="17"/><path d="M1,3.5 H18" stroke-width="2"/><path d="M5,9 L8,6.5 H15 V13 L12,15.5 H5Z M5,9 H12 V15.5 M12,9 L15,6.5"/></g></svg>
<svg style="left:613px;top:1266px" width="20" height="21"><g fill="none" stroke="#222" stroke-width="1.2" stroke-linejoin="round" stroke-linecap="round"><path d="M9,2 V11 L2,17 M9,11 L17,17 M7,4 L9,1.5 L11,4 M2,14 V17.5 H5 M14,17.5 H17 V14 M5,9 L9,6 L13,9 L9,11.5Z"/></g></svg>
<svg style="left:637px;top:1266px" width="20" height="20"><g fill="none" stroke="#222" stroke-width="1.2" stroke-linejoin="round" stroke-linecap="round"><path d="M1,16 V8 L6,2 L13,5 L16,9 V12 M6,2 L10,9 V16 H1 M10,9 H16"/><path d="M12,12 H19 L16.5,15 V19 L14.5,18 V15Z" stroke="#2d7ff9" stroke-width="1.2"/></g></svg>
<svg style="left:666px;top:1266px" width="20" height="19"><g fill="none" stroke="#222" stroke-width="1.2" stroke-linejoin="round" stroke-linecap="round"><path d="M2,8 L8,2 L18,7 L12,16Z M5,8 L9,5 L15,8 L11,13Z"/><path d="M2,8 L12,16 M8,2 L18,7" stroke="#2d7ff9" stroke-width="1.5"/></g></svg>
<svg style="left:696px;top:1275px" width="8" height="5"><path d="M0,0 H7.5 L3.75,4.5Z" fill="#222"/></svg>
<div class="a" style="left:709px;top:1263px;width:1px;height:29px;background:#6e6e6e"></div>
<svg style="left:718px;top:1267px" width="19" height="19"><g fill="none" stroke="#222" stroke-width="1.3" stroke-linejoin="round" stroke-linecap="round"><path d="M2,6 L7,2 H17 V13 L12,17 H2Z M2,6 H12 V17 M12,6 L17,2"/></g></svg>
<div class="a" style="left:741px;top:1261px;width:24px;height:31px;background:#cce4f7;border:1px solid #99ccf3;border-radius:3px"></div>
<svg style="left:744px;top:1267px" width="17" height="19"><g fill="none" stroke="#222" stroke-width="1.3" stroke-linejoin="round" stroke-linecap="round"><path d="M1.5,3 L11,1 L15.5,3 V15 L11,17.5 L1.5,15 Z M11,1 V17.5"/></g></svg>
<div class="a" style="left:767px;top:1263px;width:1px;height:29px;background:#6e6e6e"></div>
<svg style="left:778px;top:1267px" width="20" height="20"><g fill="none" stroke="#222" stroke-width="1.3" stroke-linejoin="round" stroke-linecap="round"><path d="M1,7 L5,2 H12 V8 M1,7 H8 V15 H1Z M8,7 L12,2"/><rect x="8" y="9" width="11" height="9" rx="1" fill="#fff" stroke="#2d7ff9" stroke-width="1.3"/><path d="M10,12 H10.5 M12,12 H17 M10,15 H10.5 M12,15 H17" stroke="#2d7ff9"/></g></svg>
<svg style="left:808px;top:1275px" width="8" height="5"><path d="M0,0 H7.5 L3.75,4.5Z" fill="#222"/></svg>
<div class="a" style="left:822px;top:1263px;width:1px;height:29px;background:#6e6e6e"></div>
<svg style="left:828px;top:1267px" width="20" height="20"><g fill="none" stroke="#222" stroke-width="1.2" stroke-linejoin="round" stroke-linecap="round"><path d="M2,11 Q1,5 7,4 L12,2 Q18,3 18,8 Q18,12 13,13 M7,4 L10,9 L16,7 M4,10 L13,13"/><path d="M3,13 Q8,20 15,15 M14,13 L15,15.5 L12.5,16" stroke="#2d7ff9" stroke-width="1.4"/></g></svg>
<svg style="left:856px;top:1268px" width="12" height="19"><g fill="none" stroke="#222" stroke-width="1.2" stroke-linejoin="round" stroke-linecap="round"><circle cx="6" cy="2.5" r="1.5"/><path d="M6,5 L5,10 L2,17 M5,10 L9,17 M6,6 L2,9 M6,6 L10,9"/></g></svg>
<div class="a" style="left:879px;top:1263px;width:1px;height:29px;background:#6e6e6e"></div>
<svg style="left:886px;top:1267px" width="20" height="20"><g fill="none" stroke="#222" stroke-width="1.3" stroke-linejoin="round" stroke-linecap="round"><circle cx="10" cy="10" r="7"/><circle cx="10" cy="10" r="3"/><path d="M10,1 V19 M1,10 H19"/></g></svg>
<svg style="left:911px;top:1267px" width="20" height="20"><g fill="none" stroke="#222" stroke-width="1.3" stroke-linejoin="round" stroke-linecap="round"><path d="M1,5 V1 H5 M15,1 H19 V5 M1,15 V19 H5 M15,19 H19 V15 M4,10 L10,4 L16,10 M6,8.5 V15 H14 V8.5 M9,15 V12 H11 V15"/></g></svg>
<svg style="left:938px;top:1266px" width="20" height="20"><g fill="none" stroke="#222" stroke-width="1.2" stroke-linejoin="round" stroke-linecap="round"><path d="M3,13 V9 L8,5 L16,8 V14 L10,18 Z M8,5 L11,10 L16,8 M11,10 V18"/><path d="M2,5 Q5,1 8,3 M6,1 L8,3 L5.5,4 M18,5 Q15,1 12,3 M14,1 L12,3 L14.5,4" stroke="#2d7ff9"/></g></svg>
<svg style="left:962px;top:1267px" width="20" height="20"><g fill="none" stroke="#222" stroke-width="1.3" stroke-linejoin="round" stroke-linecap="round"><circle cx="10" cy="6" r="4"/><circle cx="10" cy="6" r="1.5" fill="#222"/><path d="M4,10 H16 M10,10 V13 M10,13 L3,19 M10,13 L17,19 M10,13 V19 M1,6 H5 M15,6 H19"/></g></svg>
<div class="a" style="left:988px;top:1263px;width:1px;height:29px;background:#6e6e6e"></div>
<svg style="left:998px;top:1267px" width="20" height="20"><g fill="none" stroke="#222" stroke-width="1.2" stroke-linejoin="round" stroke-linecap="round"><path d="M1,13 V6 H4 L6,3 H10 L12,6 H13 M1,13 H7"/><circle cx="7" cy="9" r="3"/><rect x="8" y="9" width="11" height="9" rx="1" fill="#fff" stroke="#2d7ff9" stroke-width="1.3"/><path d="M10,12 H10.5 M12,12 H17 M10,15 H10.5 M12,15 H17" stroke="#2d7ff9"/></g></svg>
<svg style="left:1028px;top:1275px" width="8" height="5"><path d="M0,0 H7.5 L3.75,4.5Z" fill="#222"/></svg>
<div class="a" style="left:1041px;top:1263px;width:1px;height:29px;background:#6e6e6e"></div>
<svg style="left:1048px;top:1267px" width="20" height="20"><g fill="none" stroke="#222" stroke-width="1.3" stroke-linejoin="round" stroke-linecap="round"><path d="M4,1 Q1,5 3,7 Q5,8 6,5Z M9,5 H13 V11 L16,12 V16 H8 V12 L11,11 M3,19 H19 M9,16 L10,18 M12,16 L12,18"/></g></svg>
<svg style="left:1075px;top:1267px" width="20" height="20"><g fill="none" stroke="#222" stroke-width="1.3" stroke-linejoin="round" stroke-linecap="round"><path d="M9,1 H13 V8 L16,10 V14 H5 V10 L9,8Z M3,18 H18 M5,14 L4,17 M8,14 L7,17 M11,14 L10,17 M14,14 L13,17"/></g></svg>
<svg style="left:1099px;top:1268px" width="20" height="19"><g fill="none" stroke="#222" stroke-width="1.2" stroke-linejoin="round" stroke-linecap="round"><path d="M1,6 L5,2 H19 V13 L15,17 H1Z M1,6 H15 V17 M15,6 L19,2 M1,9.5 H15 M1,13 H15 M5,6 V9.5 M10,6 V9.5 M7,9.5 V13 M12,9.5 V13"/></g></svg>
<svg style="left:1125px;top:1267px" width="20" height="20"><g fill="none" stroke="#222" stroke-width="1.2" stroke-linejoin="round" stroke-linecap="round"><path d="M1,2 H18 M1,5 H18 M1,9 L5,18 M5,9 L9,18 M9,9 L13,18 M13,9 L17,18 M1,8 H18" stroke-width="1.1"/><path d="M1,2 H18" stroke="#2d7ff9"/></g></svg>
<svg style="left:1150px;top:1267px" width="20" height="20"><g fill="none" stroke="#222" stroke-width="1.2" stroke-linejoin="round" stroke-linecap="round"><path d="M1,18 V9 L6,2 H12 L8,8 L18,18Z M2,14 L8,5 M4,17 L10,8 M8,17 L12,11 M12,17 L14,14"/></g></svg>
<svg style="left:1174px;top:1268px" width="20" height="17"><g fill="none" stroke="#222" stroke-width="1.2" stroke-linejoin="round" stroke-linecap="round"><path d="M1,8 L4,5 L7,8 L10,5 L13,8 L16,5 L19,8" /><path d="M1,13 H19" stroke="#2d7ff9" stroke-width="1.6"/></g></svg>
<svg style="left:1203px;top:1267px" width="10" height="19"><g fill="none" stroke="#222" stroke-width="1.2" stroke-linejoin="round" stroke-linecap="round"><path d="M2,1 V11 L5,17 L8,11 V1 M2,11 H8"/></g></svg>
<svg style="left:1223px;top:1267px" width="20" height="18"><g fill="none" stroke="#222" stroke-width="1.2" stroke-linejoin="round" stroke-linecap="round"><path d="M2,15 V2 H9 V7 H17 V15 H2 Z M8,10 H14 M8,12.5 H14"/><path d="M3,3 L7,6" stroke-width="0.8"/></g></svg>
<svg style="left:1249px;top:1267px" width="20" height="20"><g fill="none" stroke="#222" stroke-width="1.2" stroke-linejoin="round" stroke-linecap="round"><path d="M2,2 L6,10 L10,2 M6,10 V18 M10,18 L18,9 V18Z M12,14 L15,11 M12,17 L18,11 M11,6 L14,3 L17,6"/></g></svg>
<div class="a" style="left:1274px;top:1263px;width:1px;height:29px;background:#6e6e6e"></div>
<svg style="left:1287px;top:1267px" width="20" height="19"><g fill="none" stroke="#aaa" stroke-width="1.1" stroke-linejoin="round" stroke-linecap="round"><path d="M2,1 V17 H19 M2,17 L7,12 M5,4 H18 M5,8 H18 M5,12 H18 M9,4 V8 M14,4 V8 M7,8 V12 M12,8 V12 M16,8 V12"/></g></svg>
<svg style="left:1315px;top:1275px" width="8" height="5"><path d="M0,0 H7.5 L3.75,4.5Z" fill="#8a8a8a"/></svg>
<svg style="left:1333px;top:1267px" width="19" height="19"><g fill="none" stroke="#aaa" stroke-width="1.1" stroke-linejoin="round" stroke-linecap="round"><rect x="1" y="1" width="14" height="15"/><path d="M1,6 H15 M1,11 H15 M6,1 V16 M11,1 V16"/><path d="M11,10 L17,14 L14.5,14.5 L15.5,18 L13.5,18 L13,15 L11,16Z" fill="#9a9a9a" stroke="#9a9a9a"/></g></svg>
<svg style="left:1361px;top:1275px" width="8" height="5"><path d="M0,0 H7.5 L3.75,4.5Z" fill="#8a8a8a"/></svg>
<svg style="left:1374px;top:1267px" width="20" height="20"><g fill="none" stroke="#aaa" stroke-width="1.1" stroke-linejoin="round" stroke-linecap="round"><path d="M5,1 H17 V19 M5,1 V19 H17 M5,5 L17,17 M5,11 L11,17 M11,1 L17,7"/><path d="M1,10 L5,6 V14Z M14,6 L10,10 L14,14Z" fill="#8ab4f8" stroke="none"/></g></svg>
<svg style="left:1399px;top:1267px" width="20" height="20"><g fill="none" stroke="#aaa" stroke-width="1.2" stroke-linejoin="round" stroke-linecap="round"><path d="M3,1 V19 M7,1 V19 M3,6 L7,3 M3,12 L7,9 M3,18 L7,15"/><path d="M12,7 Q17,9 14,13 M12,13 L14,13.5 L14.5,11" stroke="#8ab4f8"/></g></svg>
<svg style="left:1424px;top:1267px" width="20" height="20"><g fill="none" stroke="#aaa" stroke-width="1.1" stroke-linejoin="round" stroke-linecap="round"><rect x="1" y="1" width="17" height="17"/><path d="M1,9 H18 M1,14 L5,18 M5,14 L9,18 M9,14 L13,18 M13,14 L17,18"/><path d="M9.5,3 L6,7 H13Z M9.5,13 L6,9.5 H13Z" fill="#8ab4f8" stroke="none"/></g></svg>
<svg style="left:1449px;top:1267px" width="20" height="20"><g fill="none" stroke="#aaa" stroke-width="1.1" stroke-linejoin="round" stroke-linecap="round"><path d="M1,14 H19 M1,18 H19 M4,1 V14 M1,16 L4,18 M5,16 L8,18 M9,16 L12,18 M13,16 L16,18"/><path d="M12,1 V9 M9,6 L12,9 L15,6 M7,11 H14" stroke="#8ab4f8"/></g></svg>
<div class="a" style="left:1474px;top:1263px;width:1px;height:29px;background:#6e6e6e"></div>
<svg style="left:1485px;top:1267px" width="20" height="20"><g fill="none" stroke="#222" stroke-width="1.6" stroke-linejoin="round" stroke-linecap="round"><path d="M2,18 L12,8 M10,8 L12,10 L14,7 L11,5 Z"/><path d="M13,3 V1 M16,4 L18,2 M17,8 H19 M9,4 L8,2" stroke-dasharray="1,1.5"/></g></svg>
<svg style="left:1515px;top:1275px" width="8" height="5"><path d="M0,0 H7.5 L3.75,4.5Z" fill="#222"/></svg>
<div class="a" style="left:981px;top:1223px;width:32px;height:17px;background:#dcdfe1;border-radius:5px 5px 0 0"></div>
<svg style="left:984px;top:1229px" width="27" height="4"><path d="M0.5,1.5 H26.5" stroke="#f5821f" stroke-width="1.8" stroke-dasharray="5.2,1.8"/></svg>
<div class="a" style="left:268px;top:667px;width:16px;height:38px;background:#dcdfe1;border-radius:0 3px 3px 0"></div>
<svg style="left:275px;top:670px" width="3" height="34"><path d="M1.5,0.5 V32" stroke="#f5821f" stroke-width="1.7" stroke-dasharray="5,2"/></svg>
<!--BOTTOM_END-->

</body></html>
